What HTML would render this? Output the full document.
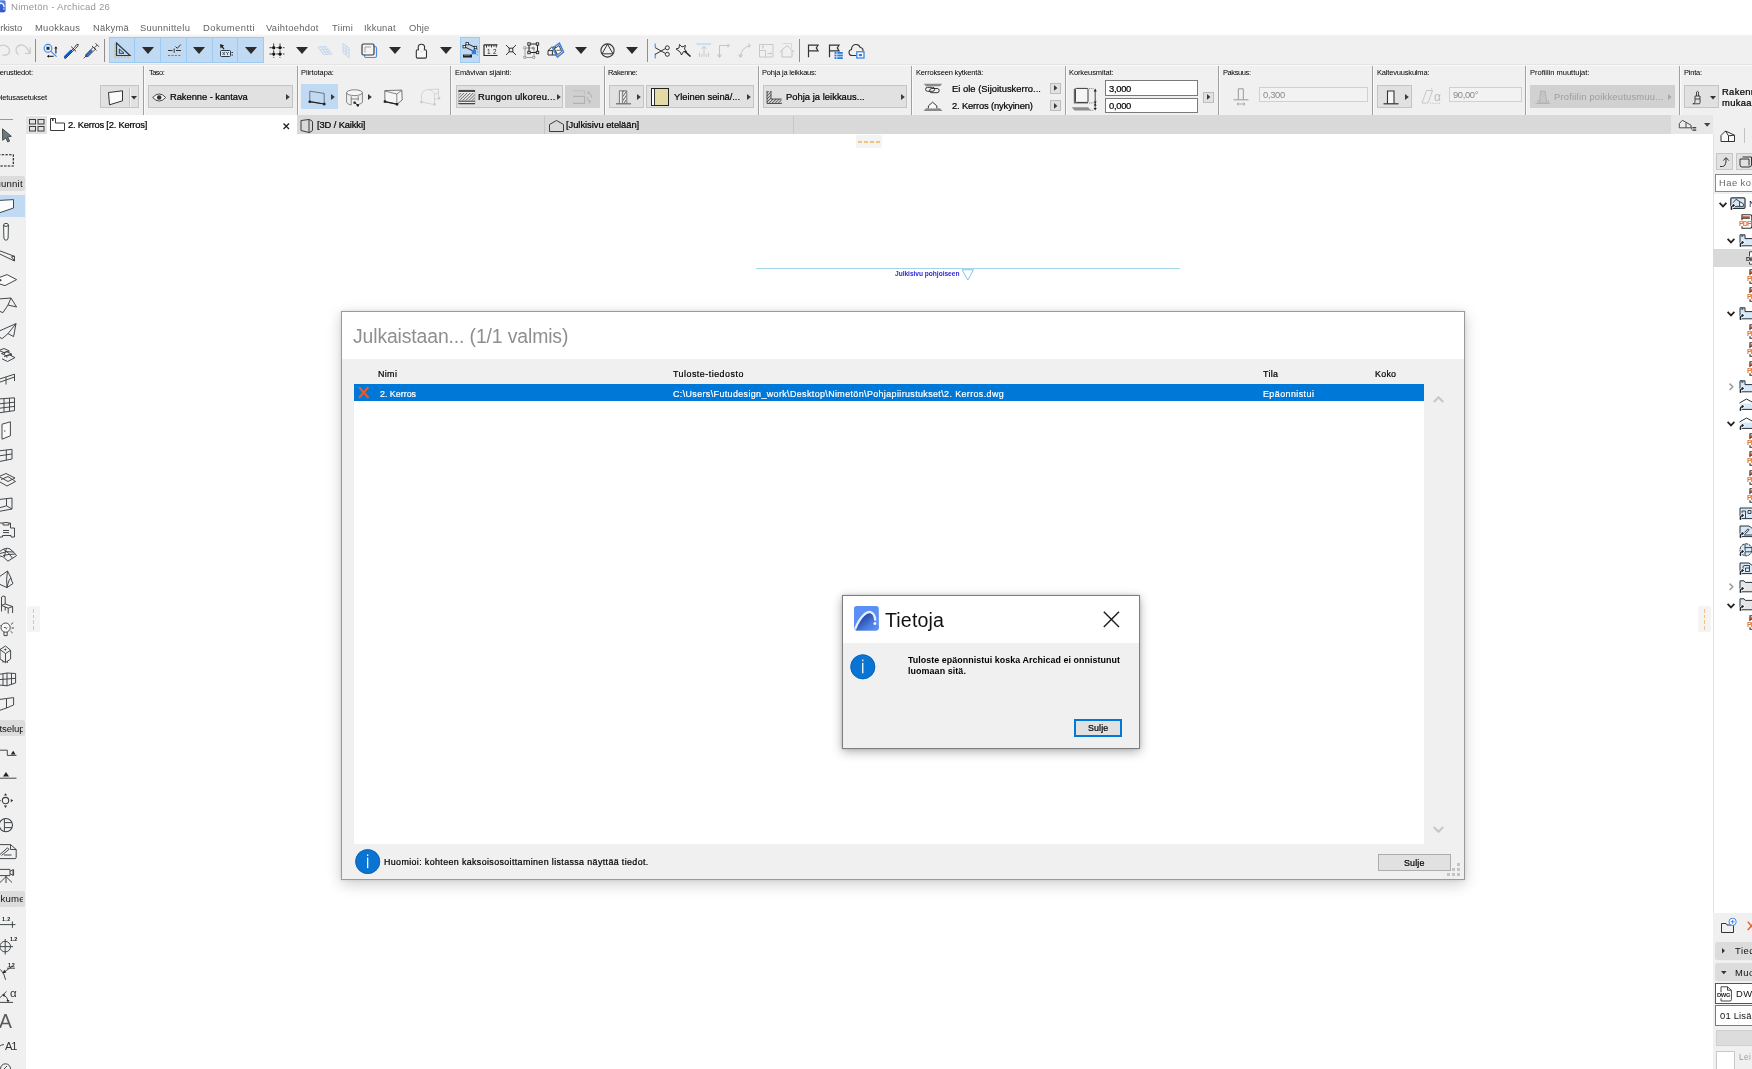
<!DOCTYPE html>
<html lang="fi">
<head>
<meta charset="utf-8">
<title>Nimetön - Archicad 26</title>
<style>
html,body{margin:0;padding:0;}
body{width:1752px;height:1069px;overflow:hidden;background:#fff;position:relative;
font-family:"Liberation Sans",sans-serif;}
.a{position:absolute;box-sizing:border-box;}
.t{white-space:nowrap;display:block;will-change:transform;}
svg{overflow:visible;}
.s{fill:none;stroke:#3c3c3c;stroke-width:1;}
</style>
</head>
<body>
<div class="a" style="left:0px;top:35px;width:1752px;height:81px;background:#f0f0f0;"></div>
<div class="a" style="left:0px;top:34px;width:1752px;height:2px;background:linear-gradient(#fff,#f0f0f0);"></div>
<div class="a" style="left:0px;top:64px;width:1752px;height:1px;background:#e4e4e4;"></div>
<div class="a" style="left:0px;top:65px;width:1752px;height:1px;background:#f8f8f8;"></div>
<svg class="a" style="left:-7px;top:0px;" width="13" height="13" viewBox="0 0 13 13"><defs><linearGradient id="lg0" x1="0" y1="0" x2="0.6" y2="1"><stop offset="0" stop-color="#6a97f2"/><stop offset="1" stop-color="#3660d2"/></linearGradient></defs><rect x="0" y="0.2" width="12.6" height="12.1" rx="1.8" fill="url(#lg0)"/><path d="M1 11.5 C2.5 4.5 8 1.2 10.4 4.2 Q11.1 5.6 11.2 7.4 L11.2 12.3 L1 12.3 Z" fill="#2f55c4" opacity="0.6"/><path d="M1 11 C2.6 4.6 8 1.4 10.4 4.4 Q11 5.6 11 7.2" fill="none" stroke="#eef4ff" stroke-width="1.5"/><circle cx="10.9" cy="9" r="0.8" fill="#eef4ff"/></svg>
<span class="a t " style="top:0.27px;font-size:9.6px;line-height:14px;color:#979797;letter-spacing:0.228px;left:11.00px;">Nimetön - Archicad 26</span>
<span class="a t " style="top:20.94px;font-size:9.4px;line-height:14px;color:#636363;letter-spacing:-0.092px;left:-5.88px;">Arkisto</span>
<span class="a t " style="top:20.94px;font-size:9.4px;line-height:14px;color:#636363;letter-spacing:0.308px;left:35.00px;">Muokkaus</span>
<span class="a t " style="top:20.94px;font-size:9.4px;line-height:14px;color:#636363;letter-spacing:0.285px;left:92.50px;">Näkymä</span>
<span class="a t " style="top:20.94px;font-size:9.4px;line-height:14px;color:#636363;letter-spacing:0.296px;left:140.40px;">Suunnittelu</span>
<span class="a t " style="top:20.94px;font-size:9.4px;line-height:14px;color:#636363;letter-spacing:0.473px;left:202.70px;">Dokumentti</span>
<span class="a t " style="top:20.94px;font-size:9.4px;line-height:14px;color:#636363;letter-spacing:0.312px;left:266.40px;">Vaihtoehdot</span>
<span class="a t " style="top:20.94px;font-size:9.4px;line-height:14px;color:#636363;letter-spacing:0.353px;left:331.50px;">Tiimi</span>
<span class="a t " style="top:20.94px;font-size:9.4px;line-height:14px;color:#636363;letter-spacing:0.216px;left:364.40px;">Ikkunat</span>
<span class="a t " style="top:20.94px;font-size:9.4px;line-height:14px;color:#636363;letter-spacing:0.148px;left:408.50px;">Ohje</span>
<div class="a" style="left:26px;top:115px;width:1645px;height:19px;background:#d9d9d9;"></div>
<div class="a" style="left:26px;top:115px;width:270.5px;height:19px;background:#fff;"></div>
<div class="a" style="left:26px;top:116px;width:21px;height:17.5px;background:#e2e2e2;"></div>
<div class="a" style="left:544px;top:116px;width:1px;height:18px;background:#c6c6c6;"></div>
<div class="a" style="left:793px;top:116px;width:1px;height:18px;background:#c6c6c6;"></div>
<svg class="a" style="left:29px;top:118.5px;" width="16" height="13" viewBox="0 0 16 13"><g class="s" stroke="#4a4a4a"><rect x="0.5" y="0.5" width="6" height="4.5"/><rect x="9" y="0.5" width="6" height="4.5"/><rect x="0.5" y="7.5" width="6" height="4.5"/><rect x="9" y="7.5" width="6" height="4.5"/></g></svg>
<svg class="a" style="left:50px;top:118px;" width="16" height="13" viewBox="0 0 16 13"><path class="s" stroke="#333" d="M0.5 0.5 H5.5 V5 H14.5 V12.5 H0.5 Z M2.5 0.5 V3 M2.5 2 H4"/></svg>
<span class="a t " style="top:118.14px;font-size:9.4px;line-height:14px;color:#000;-webkit-text-stroke:0.22px;letter-spacing:-0.231px;left:67.50px;">2. Kerros [2. Kerros]</span>
<svg class="a" style="left:283px;top:122.5px;" width="7" height="7" viewBox="0 0 7 7"><path d="M0.5 0.5 L6 6 M6 0.5 L0.5 6" stroke="#222" stroke-width="1.3" fill="none"/></svg>
<svg class="a" style="left:300px;top:118.5px;" width="14" height="14" viewBox="0 0 14 14"><path class="s" stroke="#333" d="M1 1.5 L9 0.5 Q12.5 1.5 12.5 3 V11 Q12.5 12.5 9 13.5 L1 11.5 Z M9 0.5 V13.5" fill="#fff"/></svg>
<span class="a t " style="top:118.14px;font-size:9.4px;line-height:14px;color:#000;-webkit-text-stroke:0.22px;letter-spacing:-0.129px;left:316.70px;">[3D / Kaikki]</span>
<svg class="a" style="left:549px;top:119.5px;" width="15" height="12" viewBox="0 0 15 12"><path class="s" stroke="#333" fill="#fff" d="M0.5 11.5 V4.5 L7.5 0.5 L14.5 4.5 V11.5 Z"/></svg>
<span class="a t " style="top:118.14px;font-size:9.4px;line-height:14px;color:#000;-webkit-text-stroke:0.22px;letter-spacing:-0.044px;left:565.80px;">[Julkisivu etelään]</span>
<div class="a" style="left:1671px;top:115px;width:42px;height:19px;background:#e7e7e7;"></div>
<svg class="a" style="left:1678px;top:119px;" width="20" height="13" viewBox="0 0 20 13"><path d="M1.3 8.8 V4.6 L4.4 1.3 L13 6.2 V8.8 Z M8 3.6 V8.8" fill="#ececec" stroke="#4a4a4a" stroke-width="1"/><rect x="14.4" y="8" width="3.8" height="1.4" fill="#444"/><rect x="14.4" y="10.4" width="3.8" height="1.4" fill="#444"/><rect x="13" y="7.6" width="0.9" height="3" fill="#666"/></svg>
<svg class="a" style="left:1703.6px;top:123.2px;" width="6.4" height="3.8" viewBox="0 0 6.4 3.8"><path d="M0 0 H6.4 L3.2 3.8 Z" fill="#444"/></svg>
<div class="a" style="left:856px;top:135px;width:26px;height:13px;background:#f4f4f4;border-radius:2px;"></div>
<div class="a" style="left:858.3px;top:141.3px;width:4px;height:1.3px;background:#f5c27c;"></div>
<div class="a" style="left:864.3px;top:141.3px;width:4px;height:1.3px;background:#f5c27c;"></div>
<div class="a" style="left:870.3px;top:141.3px;width:4px;height:1.3px;background:#f5c27c;"></div>
<div class="a" style="left:876.3px;top:141.3px;width:4px;height:1.3px;background:#f5c27c;"></div>
<div class="a" style="left:26.5px;top:606px;width:13px;height:26px;background:#f4f4f4;border-radius:2px;"></div>
<div class="a" style="left:1698px;top:606px;width:13px;height:25.5px;background:#f4f4f4;border-radius:2px;"></div>
<div class="a" style="left:33px;top:609.0px;width:1.3px;height:3.8px;background:#f5c27c;"></div>
<div class="a" style="left:1704px;top:609.0px;width:1.3px;height:3.8px;background:#f5c27c;"></div>
<div class="a" style="left:33px;top:614.6px;width:1.3px;height:3.8px;background:#f5c27c;"></div>
<div class="a" style="left:1704px;top:614.6px;width:1.3px;height:3.8px;background:#f5c27c;"></div>
<div class="a" style="left:33px;top:620.2px;width:1.3px;height:3.8px;background:#f5c27c;"></div>
<div class="a" style="left:1704px;top:620.2px;width:1.3px;height:3.8px;background:#f5c27c;"></div>
<div class="a" style="left:33px;top:625.8px;width:1.3px;height:3.8px;background:#f5c27c;"></div>
<div class="a" style="left:1704px;top:625.8px;width:1.3px;height:3.8px;background:#f5c27c;"></div>
<div class="a" style="left:756px;top:268px;width:424px;height:1.2px;background:#a5d3ea;"></div>
<span class="a t " style="top:267.81px;font-size:6.6px;line-height:11px;color:#2a2ad8;font-weight:bold;letter-spacing:-0.022px;left:895.00px;">Julkisivu pohjoiseen</span>
<svg class="a" style="left:961px;top:268.5px;" width="14" height="12" viewBox="0 0 14 12"><path d="M1 0.8 L12.5 0.8 L6.8 11 Z" fill="#fff" stroke="#7fc4ea" stroke-width="1"/></svg>
<svg class="a" style="left:-4px;top:43px;" width="16" height="14" viewBox="0 0 16 14"><path d="M4 3 Q8.5 0.8 12 4.2 Q15 8 12.2 11 Q10 13 6.5 11.8" fill="none" stroke="#cdcdcd" stroke-width="1.3"/></svg>
<svg class="a" style="left:15px;top:43px;" width="17" height="14" viewBox="0 0 17 14"><path d="M3.6 11.8 Q0 8.5 1.4 5 Q3.5 1.2 8 2.2 Q11.5 3.2 14.8 10 M10 10.4 H15.3 V4.2" fill="none" stroke="#cdcdcd" stroke-width="1.3"/></svg>
<div class="a" style="left:34.9px;top:39px;width:1.3px;height:22.700000000000003px;background:#8e8e8e;"></div>
<svg class="a" style="left:43px;top:43px;" width="16" height="16" viewBox="0 0 16 16"><circle cx="5" cy="5.3" r="3.9" fill="#e9f2fc" stroke="#3f86e0" stroke-width="1.1"/><rect x="3.5" y="3.8" width="3" height="3" fill="#1e2a33"/><path d="M8 8.3 L13.6 13.7" stroke="#3f86e0" stroke-width="1.1"/><path d="M12.9 10.6 V4.2" stroke="#1e1e1e" stroke-width="1.1"/><path d="M11.3 5.4 L12.9 3.2 L14.5 5.4 Z" fill="#1e1e1e"/><path d="M10.6 13.3 H5" stroke="#1e1e1e" stroke-width="1.1"/><path d="M6 11.8 L3.8 13.3 L6 14.8 Z" fill="#1e1e1e"/></svg>
<svg class="a" style="left:63px;top:42px;" width="17" height="17" viewBox="0 0 17 17"><path d="M2.4 14.8 L8 9.2" stroke="#2a6fd6" stroke-width="3" stroke-linecap="round"/><path d="M1.5 15.6 L11.6 5.4 Q13.6 1.6 15.2 2.2 Q16 3.6 12.6 6.4 L2.8 16.2 Q1.2 16.8 1.5 15.6 Z" fill="none" stroke="#333" stroke-width="0.9"/><path d="M8.2 4.6 L13 9.4" stroke="#333" stroke-width="1"/></svg>
<svg class="a" style="left:83px;top:42px;" width="17" height="17" viewBox="0 0 17 17"><path d="M3.5 13.8 L8.2 9" stroke="#2a6fd6" stroke-width="2.6" stroke-linecap="round"/><path d="M0.8 16.3 L3 14 M2.5 13 L10.5 5 L12.5 7 L4.5 15 Z M9 4 L13.5 8.5 M11.8 5.5 L14.3 3 M12.5 1.2 L16 4.8" fill="none" stroke="#333" stroke-width="0.9"/></svg>
<div class="a" style="left:103.9px;top:39px;width:1.3px;height:22.700000000000003px;background:#8e8e8e;"></div>
<div class="a" style="left:109px;top:37.2px;width:155px;height:25.5px;background:#bfdaf2;border:1px solid #9ccaf0;"></div>
<div class="a" style="left:133.9px;top:38px;width:1px;height:24px;background:#9ccaf0;"></div>
<div class="a" style="left:159.9px;top:38px;width:1px;height:24px;background:#9ccaf0;"></div>
<div class="a" style="left:185.8px;top:38px;width:1px;height:24px;background:#9ccaf0;"></div>
<div class="a" style="left:211.7px;top:38px;width:1px;height:24px;background:#9ccaf0;"></div>
<div class="a" style="left:236.9px;top:38px;width:1px;height:24px;background:#9ccaf0;"></div>
<svg class="a" style="left:114px;top:42px;" width="18" height="16" viewBox="0 0 18 16"><path d="M2.5 1 L16 13.5 H2.5 Z" fill="none" stroke="#2b3a48" stroke-width="1.2"/><path d="M5.3 7 L10 11.3 H5.3 Z" fill="none" stroke="#2b3a48" stroke-width="1"/><path d="M1 1.5 V15 H16.5" fill="none" stroke="#f0a040" stroke-width="1" stroke-dasharray="2 1.2"/></svg>
<svg class="a" style="left:141.7px;top:46.9px;" width="12" height="7" viewBox="0 0 12 7"><path d="M0 0 H12 L6.0 7 Z" fill="#2b2b2b"/></svg>
<svg class="a" style="left:167px;top:43px;" width="15" height="14" viewBox="0 0 15 14"><path d="M1 7.5 H5.5 M9 7.5 H14 M7.2 5.5 V9.8" stroke="#333" stroke-width="1" fill="none"/><path d="M8.5 3.5 L10.3 5.3 L13.8 1.5" stroke="#333" stroke-width="1" fill="none"/><path d="M1 12.5 H14" stroke="#3f86e0" stroke-width="1.1" stroke-dasharray="2.2 1.2"/></svg>
<svg class="a" style="left:193.0px;top:46.9px;" width="12" height="7" viewBox="0 0 12 7"><path d="M0 0 H12 L6.0 7 Z" fill="#2b2b2b"/></svg>
<svg class="a" style="left:219px;top:43px;" width="15" height="15" viewBox="0 0 15 15"><path d="M1 1 L1.5 5.5 L2.8 4.3 L4.5 6.5 L5.5 5.7 L3.8 3.6 L5.2 2.6 Z" fill="#222"/><rect x="1.5" y="7.5" width="10" height="6" rx="1" fill="#dbe9f5" stroke="#2b3a48" stroke-width="1"/><path d="M3.5 9 L6 12 M6 9 L3.5 12 M7.2 9 L8.5 10.5 L9.8 9 M8.5 10.5 V12" stroke="#2b3a48" stroke-width="0.8" fill="none"/><path d="M12.5 9.5 H14 M12.5 12 H14" stroke="#2b3a48" stroke-width="1"/></svg>
<svg class="a" style="left:244.7px;top:46.9px;" width="12" height="7" viewBox="0 0 12 7"><path d="M0 0 H12 L6.0 7 Z" fill="#2b2b2b"/></svg>
<svg class="a" style="left:268px;top:41.5px;" width="18" height="18" viewBox="0 0 18 18"><path d="M1.5 5.7 H16.5 M1.5 12 H16.5 M5.7 1.5 V15.8 M12 1.5 V15.8" stroke="#222" stroke-width="0.9" stroke-dasharray="2.4 1" fill="none"/><circle cx="5.7" cy="5.7" r="1.6" fill="#111"/><circle cx="12" cy="5.7" r="1.6" fill="#111"/><circle cx="5.7" cy="12" r="1.6" fill="#111"/><circle cx="12" cy="12" r="1.6" fill="#111"/></svg>
<svg class="a" style="left:296.0px;top:46.9px;" width="12" height="7" viewBox="0 0 12 7"><path d="M0 0 H12 L6.0 7 Z" fill="#2b2b2b"/></svg>
<svg class="a" style="left:317px;top:46px;" width="16" height="9" viewBox="0 0 16 9"><path d="M1 1 L9 0.5 L15 8 L6.5 8.5 Z M4 0.8 L9.7 8.3 M6.7 0.6 L12.4 8.1 M3.2 3.8 L11.4 3.3 M5 6.2 L13.2 5.7" fill="none" stroke="#b7d0ee" stroke-width="0.8"/></svg>
<svg class="a" style="left:342px;top:43px;" width="8" height="15" viewBox="0 0 8 15"><path d="M1 0.5 L7 5 V14.5 L1 9.5 Z M4 2.7 V12 M1 3.6 L7 8 M1 6.6 L7 11.2" fill="none" stroke="#b7d0ee" stroke-width="0.8"/></svg>
<svg class="a" style="left:361px;top:42.5px;" width="17" height="16" viewBox="0 0 17 16"><rect x="3.5" y="3.5" width="12" height="11" rx="1.5" fill="none" stroke="#4c8be0" stroke-width="1.1"/><rect x="1" y="1" width="12" height="11" rx="1.5" fill="#f4f4f4" stroke="#3a3a3a" stroke-width="1.2"/><path d="M4 9.5 V4 H10" fill="none" stroke="#9a9a9a" stroke-width="0.9"/></svg>
<svg class="a" style="left:388.7px;top:46.9px;" width="12" height="7" viewBox="0 0 12 7"><path d="M0 0 H12 L6.0 7 Z" fill="#2b2b2b"/></svg>
<svg class="a" style="left:414px;top:42.5px;" width="14" height="16" viewBox="0 0 14 16"><rect x="2.3" y="6.8" width="10.2" height="8.3" rx="1.3" fill="#f7f7f7" stroke="#333" stroke-width="1.1"/><circle cx="7.4" cy="4.4" r="3.2" fill="#f7f7f7" stroke="#333" stroke-width="1.1"/><rect x="5" y="6" width="4.8" height="2" fill="#f7f7f7"/></svg>
<svg class="a" style="left:440.3px;top:46.9px;" width="12" height="7" viewBox="0 0 12 7"><path d="M0 0 H12 L6.0 7 Z" fill="#2b2b2b"/></svg>
<div class="a" style="left:460px;top:37.2px;width:20px;height:25.5px;background:#bfdaf2;border:1px solid #9ccaf0;"></div>
<svg class="a" style="left:462px;top:42px;" width="16" height="17" viewBox="0 0 16 17"><path d="M2 4.5 L5 1.5 L13.5 5.5 L11 9 Z" fill="none" stroke="#222" stroke-width="1"/><rect x="1" y="3.5" width="2.4" height="2.4" fill="#fff" stroke="#222" stroke-width="0.8"/><rect x="4" y="0.5" width="2.4" height="2.4" fill="#fff" stroke="#222" stroke-width="0.8"/><rect x="12.3" y="4.3" width="2.4" height="2.4" fill="#fff" stroke="#222" stroke-width="0.8"/><rect x="9.8" y="8" width="4.2" height="4.2" fill="#2f7de1"/><path d="M14.5 8 L16 7 M15 10 H16.5 M14.5 12.3 L16 13.2 M9 13 L8 14.5" stroke="#2f7de1" stroke-width="0.8"/><rect x="1" y="12.5" width="9" height="3" fill="#222"/><path d="M3 12.5 V14 M5 12.5 V14 M7 12.5 V14" stroke="#bfdaf2" stroke-width="0.7"/></svg>
<svg class="a" style="left:483px;top:44.2px;" width="15" height="13" viewBox="0 0 15 13"><path d="M0.8 0.8 H14.5 M1 0.8 V11.5 H14.5" fill="none" stroke="#2b2b2b" stroke-width="1.2"/><path d="M3.5 1 V3.5 M6 1 V2.8 M8.5 1 V3.5 M11 1 V2.8 M13.3 1 V3.5" stroke="#2b2b2b" stroke-width="0.9"/></svg>
<span class="a t " style="top:47.28px;font-size:6.4px;line-height:10px;color:#222;letter-spacing:2.481px;left:486.60px;">12</span>
<svg class="a" style="left:505px;top:44.2px;" width="12" height="12" viewBox="0 0 12 12"><path d="M1 1 L11 11 M11 1 L1 11" stroke="#333" stroke-width="1"/><rect x="4.2" y="4.2" width="3.6" height="3.6" fill="#f0f0f0" stroke="#333" stroke-width="1"/></svg>
<svg class="a" style="left:523px;top:42px;" width="17" height="17" viewBox="0 0 17 17"><rect x="2" y="6" width="9" height="9.5" fill="none" stroke="#8a8a8a" stroke-width="0.8"/><rect x="6" y="2" width="8.5" height="8.5" fill="none" stroke="#222" stroke-width="1"/><rect x="4.8" y="0.8" width="2.4" height="2.4" fill="#fff" stroke="#222" stroke-width="0.9"/><rect x="13.3" y="0.8" width="2.4" height="2.4" fill="#fff" stroke="#222" stroke-width="0.9"/><rect x="4.8" y="9.3" width="2.4" height="2.4" fill="#fff" stroke="#222" stroke-width="0.9"/><rect x="13.3" y="9.3" width="2.4" height="2.4" fill="#fff" stroke="#222" stroke-width="0.9"/><circle cx="10.3" cy="6.2" r="1" fill="none" stroke="#666" stroke-width="0.7"/><rect x="0.8" y="4.8" width="2" height="2" fill="#fff" stroke="#8a8a8a" stroke-width="0.7"/><rect x="0.8" y="14.3" width="2" height="2" fill="#fff" stroke="#8a8a8a" stroke-width="0.7"/><rect x="9.8" y="14.3" width="2" height="2" fill="#fff" stroke="#8a8a8a" stroke-width="0.7"/></svg>
<svg class="a" style="left:547px;top:42px;" width="18" height="17" viewBox="0 0 18 17"><path d="M1 8.6 L4.6 5.2 H9 V13 H1 Z M1 8.6 H5.4 V13 M5.4 8.6 L9 5.2" fill="#f4f4f4" stroke="#333" stroke-width="1"/><path d="M5.6 6 L12.4 1.2 L16.6 10 L10.4 15 Z" fill="none" stroke="#3b82e0" stroke-width="1.5"/><path d="M7.4 6.8 L12 3.6 L14.6 9.4 L10.6 12.6 Z" fill="#fff" stroke="#333" stroke-width="0.9"/><path d="M9.4 8.4 L13.6 8.2" stroke="#333" stroke-width="0.8"/></svg>
<svg class="a" style="left:575.3px;top:46.9px;" width="12" height="7" viewBox="0 0 12 7"><path d="M0 0 H12 L6.0 7 Z" fill="#2b2b2b"/></svg>
<svg class="a" style="left:599.5px;top:42.5px;" width="15" height="15" viewBox="0 0 15 15"><circle cx="7.5" cy="7.5" r="6.6" fill="none" stroke="#333" stroke-width="1.1"/><path d="M7.5 1.2 L13 10.8 H2 Z" fill="none" stroke="#333" stroke-width="1"/></svg>
<svg class="a" style="left:626.3px;top:46.9px;" width="12" height="7" viewBox="0 0 12 7"><path d="M0 0 H12 L6.0 7 Z" fill="#2b2b2b"/></svg>
<div class="a" style="left:646.9px;top:39px;width:1.3px;height:22.700000000000003px;background:#8e8e8e;"></div>
<svg class="a" style="left:654px;top:42.5px;" width="17" height="16" viewBox="0 0 17 16"><path d="M1.2 0.5 V4 M1.2 10.5 V15.5" stroke="#3b82e0" stroke-width="1"/><path d="M1 4.5 L11.5 10.5 M1 11.5 L11.5 5.5" stroke="#333" stroke-width="1" fill="none"/><circle cx="13.3" cy="4.8" r="2" fill="none" stroke="#333" stroke-width="1"/><circle cx="13.3" cy="11.3" r="2" fill="none" stroke="#333" stroke-width="1"/></svg>
<svg class="a" style="left:674.5px;top:43px;" width="17" height="15" viewBox="0 0 17 15"><path d="M1 6 L4 5 L4.5 1.5 L7 4 L10.5 2.5 L9.5 6 L11.5 8.5 L8.3 8.8 L6.5 12 L5 8.8 Z" fill="none" stroke="#333" stroke-width="1"/><path d="M9.5 8 L15.5 13.5" stroke="#222" stroke-width="1.6"/></svg>
<svg class="a" style="left:696px;top:43px;" width="16" height="15" viewBox="0 0 16 15"><path d="M0.5 1 H15" stroke="#a9cdf3" stroke-width="1"/><path d="M8 3.5 V13.5 M5.5 6 L8 3.3 L10.5 6 M3.5 9.5 V14 M5.8 11 V14 M10.2 11 V14 M12.5 9.5 V14" fill="none" stroke="#c4c4c4" stroke-width="0.9"/></svg>
<svg class="a" style="left:717px;top:43px;" width="15" height="15" viewBox="0 0 15 15"><path d="M2.5 14 V2.5 H13 M11 0.5 V4.5 M0.5 12 H4.5 M1 12.5 L2.5 14.5 L4 12.5" fill="none" stroke="#c4c4c4" stroke-width="1"/></svg>
<svg class="a" style="left:738px;top:43px;" width="15" height="15" viewBox="0 0 15 15"><path d="M2.5 14 Q3 4 13 2.5 M11 0.5 V4.5 M0.5 12 H4.5 M1 12.5 L2.5 14.5 L4 12.5" fill="none" stroke="#c4c4c4" stroke-width="1"/></svg>
<svg class="a" style="left:759px;top:43.5px;" width="15" height="14" viewBox="0 0 15 14"><path d="M0.5 0.5 H14 V13 H0.5 Z M0.5 6.5 H6.5 V13 M4 4.5 V2 M3 3 L4 1.8 L5 3 M8.5 9.5 H12.5 M11.5 8.5 L12.7 9.5 L11.5 10.5" fill="none" stroke="#c4c4c4" stroke-width="0.9"/></svg>
<svg class="a" style="left:779px;top:43px;" width="16" height="15" viewBox="0 0 16 15"><path d="M3.5 0.5 H12.5 V5" fill="none" stroke="#d6d6d6" stroke-width="0.9"/><path d="M0.8 9 L8 2.5 L15.2 9 M3 7.5 V14 H13 V7.5" fill="none" stroke="#c4c4c4" stroke-width="1"/></svg>
<div class="a" style="left:798.9px;top:39px;width:1.3px;height:22.700000000000003px;background:#8e8e8e;"></div>
<svg class="a" style="left:806.5px;top:43.5px;" width="13" height="15" viewBox="0 0 13 15"><path d="M1.5 13.2 V1.2 H11 L9.3 3.9 L11 6.8 H1.5" fill="none" stroke="#333" stroke-width="1.2"/></svg>
<svg class="a" style="left:827.5px;top:43.5px;" width="16" height="16" viewBox="0 0 16 16"><path d="M1.5 13.2 V1.2 H11 L9.3 3.9 L11 6.8 H1.5" fill="none" stroke="#333" stroke-width="1.2"/><rect x="6.5" y="8" width="2" height="1.8" fill="#2f7de1"/><rect x="9.3" y="8" width="5.5" height="1.8" fill="#2f7de1"/><rect x="6.5" y="10.6" width="2" height="1.8" fill="#2f7de1"/><rect x="9.3" y="10.6" width="5.5" height="1.8" fill="#2f7de1"/><rect x="6.5" y="13.2" width="2" height="1.8" fill="#2f7de1"/><rect x="9.3" y="13.2" width="5.5" height="1.8" fill="#2f7de1"/></svg>
<svg class="a" style="left:847.5px;top:43px;" width="17" height="16" viewBox="0 0 17 16"><path d="M8.5 12.5 H4.5 Q1 12.5 1 9.5 Q1 7 3.5 6.5 Q3.5 2.5 7.2 1.5 Q11 1 12.3 4.5 Q15.3 5 15 8" fill="none" stroke="#333" stroke-width="1.1"/><rect x="8.8" y="8.8" width="7.2" height="6.2" fill="#fff" stroke="#2f7de1" stroke-width="1.2"/><rect x="10.8" y="11" width="3.2" height="2.2" fill="#2f7de1"/></svg>
<div class="a" style="left:143.0px;top:66px;width:1px;height:48.5px;background:#a0a0a0;"></div>
<div class="a" style="left:144.0px;top:66px;width:1px;height:48.5px;background:#fafafa;"></div>
<div class="a" style="left:297.0px;top:66px;width:1px;height:48.5px;background:#a0a0a0;"></div>
<div class="a" style="left:298.0px;top:66px;width:1px;height:48.5px;background:#fafafa;"></div>
<div class="a" style="left:450.2px;top:66px;width:1px;height:48.5px;background:#a0a0a0;"></div>
<div class="a" style="left:451.2px;top:66px;width:1px;height:48.5px;background:#fafafa;"></div>
<div class="a" style="left:604.0px;top:66px;width:1px;height:48.5px;background:#a0a0a0;"></div>
<div class="a" style="left:605.0px;top:66px;width:1px;height:48.5px;background:#fafafa;"></div>
<div class="a" style="left:757.5px;top:66px;width:1px;height:48.5px;background:#a0a0a0;"></div>
<div class="a" style="left:758.5px;top:66px;width:1px;height:48.5px;background:#fafafa;"></div>
<div class="a" style="left:910.9px;top:66px;width:1px;height:48.5px;background:#a0a0a0;"></div>
<div class="a" style="left:911.9px;top:66px;width:1px;height:48.5px;background:#fafafa;"></div>
<div class="a" style="left:1064.7px;top:66px;width:1px;height:48.5px;background:#a0a0a0;"></div>
<div class="a" style="left:1065.7px;top:66px;width:1px;height:48.5px;background:#fafafa;"></div>
<div class="a" style="left:1218.1px;top:66px;width:1px;height:48.5px;background:#a0a0a0;"></div>
<div class="a" style="left:1219.1px;top:66px;width:1px;height:48.5px;background:#fafafa;"></div>
<div class="a" style="left:1371.9px;top:66px;width:1px;height:48.5px;background:#a0a0a0;"></div>
<div class="a" style="left:1372.9px;top:66px;width:1px;height:48.5px;background:#fafafa;"></div>
<div class="a" style="left:1525.1px;top:66px;width:1px;height:48.5px;background:#a0a0a0;"></div>
<div class="a" style="left:1526.1px;top:66px;width:1px;height:48.5px;background:#fafafa;"></div>
<div class="a" style="left:1679.1px;top:66px;width:1px;height:48.5px;background:#a0a0a0;"></div>
<div class="a" style="left:1680.1px;top:66px;width:1px;height:48.5px;background:#fafafa;"></div>
<span class="a t " style="top:67.20px;font-size:7.5px;line-height:12px;color:#000;letter-spacing:-0.182px;left:-5.02px;">Perustiedot:</span>
<span class="a t " style="top:92.00px;font-size:7.5px;line-height:12px;color:#000;letter-spacing:-0.119px;left:-5.11px;">Oletusasetukset</span>
<div class="a" style="left:99.5px;top:85.3px;width:39.5px;height:23.2px;background:#e1e1e1;border:1px solid #c4c4c4;"></div>
<div class="a" style="left:129.3px;top:88px;width:1px;height:18px;background:#c4c4c4;"></div>
<div class="a" style="left:130.3px;top:88px;width:1px;height:18px;background:#f3f3f3;"></div>
<svg class="a" style="left:107px;top:89.5px;" width="18" height="16" viewBox="0 0 18 16"><path d="M1.5 2.5 L15.5 0.8 V10.8 L2.5 14.8 Z" fill="#fafafa" stroke="#333" stroke-width="1"/></svg>
<svg class="a" style="left:131.3px;top:95.5px;" width="6" height="3.4" viewBox="0 0 6 3.4"><path d="M0 0 H6 L3.0 3.4 Z" fill="#333"/></svg>
<span class="a t " style="top:67.20px;font-size:7.5px;line-height:12px;color:#000;letter-spacing:-0.532px;left:148.50px;">Taso:</span>
<div class="a" style="left:148px;top:85.3px;width:145.3px;height:23.2px;background:#e1e1e1;border:1px solid #c4c4c4;"></div>
<svg class="a" style="left:152px;top:92.5px;" width="15" height="9" viewBox="0 0 15 9"><path d="M0.7 4.5 Q7.2 -2.6 13.7 4.5 Q7.2 11.6 0.7 4.5 Z" fill="#fafafa" stroke="#333" stroke-width="0.9"/><circle cx="7.2" cy="4.5" r="2.3" fill="#333"/></svg>
<span class="a t " style="top:89.84px;font-size:9.4px;line-height:14px;color:#000;-webkit-text-stroke:0.22px;letter-spacing:-0.057px;left:170.30px;">Rakenne - kantava</span>
<svg class="a" style="left:286px;top:93.8px;" width="3.8" height="6.0" viewBox="0 0 3.8 6.0"><path d="M0 0 L3.8 3.0 L0 6.0 Z" fill="#3a3a3a"/></svg>
<span class="a t " style="top:67.20px;font-size:7.5px;line-height:12px;color:#000;letter-spacing:-0.087px;left:301.30px;">Piirtotapa:</span>
<div class="a" style="left:301px;top:84px;width:37px;height:24.7px;background:#bfdaf2;"></div>
<svg class="a" style="left:306px;top:89.5px;" width="20" height="16" viewBox="0 0 20 16"><path d="M3.8 1.2 L18.2 3.4 V14 L3.8 11.6 Z" fill="none" stroke="#5a5a5a" stroke-width="0.8"/><path d="M3.6 11.6 L18.2 14" stroke="#222" stroke-width="1.2"/><rect x="2.5" y="10.4" width="2.5" height="2.5" rx="0.6" fill="#222"/><rect x="17" y="12.8" width="2.5" height="2.5" rx="0.6" fill="#222"/></svg>
<svg class="a" style="left:331px;top:93.5px;" width="3.8" height="6.0" viewBox="0 0 3.8 6.0"><path d="M0 0 L3.8 3.0 L0 6.0 Z" fill="#3a3a3a"/></svg>
<svg class="a" style="left:344.5px;top:88.5px;" width="19" height="18" viewBox="0 0 19 18"><ellipse cx="9.5" cy="3.7" rx="7.9" ry="2.9" fill="#f6f6f6" stroke="#6a6a6a" stroke-width="0.8"/><path d="M1.6 3.7 V13.4 Q3 15.4 6.2 16 V7.2 M17.4 3.7 V13.4 Q16.4 14.6 13.2 15.6 M13.2 11.5 V7.2 M6.2 10 H13.2" fill="none" stroke="#6a6a6a" stroke-width="0.8"/><rect x="8.4" y="12.4" width="2.4" height="2.4" rx="0.6" fill="#222"/><rect x="11.6" y="15" width="2.4" height="2.4" rx="0.6" fill="#222"/><path d="M9.5 13.5 L12.8 16.2" stroke="#222" stroke-width="1"/></svg>
<svg class="a" style="left:368px;top:93.5px;" width="3.8" height="6.0" viewBox="0 0 3.8 6.0"><path d="M0 0 L3.8 3.0 L0 6.0 Z" fill="#3a3a3a"/></svg>
<svg class="a" style="left:382.5px;top:89px;" width="21" height="17" viewBox="0 0 21 17"><path d="M1.8 1.6 L18.8 1.1 L19.2 11 L13.8 15.2 L1.9 12.6 Z" fill="#f6f6f6" stroke="#555" stroke-width="0.8"/><path d="M1.8 2 L13.8 5 L18.8 1.4 M13.8 5 V15.2" fill="none" stroke="#6a6a6a" stroke-width="0.8"/><path d="M1.9 12.6 L13.8 15.2" stroke="#222" stroke-width="1.2"/><rect x="0.7" y="11.3" width="2.5" height="2.5" rx="0.6" fill="#222"/><rect x="12.8" y="14" width="2.5" height="2.5" rx="0.6" fill="#222"/></svg>
<svg class="a" style="left:418.5px;top:88px;" width="23" height="18" viewBox="0 0 23 18"><path d="M2.5 14 V7.5 Q3 2 9 1.5 L19.5 1 V10.5 L15.5 11.2 V16.6 L2.5 14 M9 1.5 Q14.5 2.5 15.5 6.5 L19.5 4.5 M15.5 6.5 V11.2" fill="none" stroke="#cdcdcd" stroke-width="0.8"/><rect x="1.3" y="13" width="2.2" height="2.2" fill="#c8c8c8"/><rect x="14.5" y="15.3" width="2.2" height="2.2" fill="#c8c8c8"/><rect x="19" y="9.2" width="2.2" height="2.2" fill="#c8c8c8"/></svg>
<span class="a t " style="top:67.20px;font-size:7.5px;line-height:12px;color:#000;letter-spacing:-0.091px;left:455.30px;">Emävivan sijainti:</span>
<div class="a" style="left:455.5px;top:85.3px;width:107.5px;height:23.2px;background:#e1e1e1;border:1px solid #c4c4c4;"></div>
<svg class="a" style="left:458px;top:88.5px;" width="18" height="17" viewBox="0 0 18 17"><defs><pattern id="h1" width="2.2" height="2.2" patternUnits="userSpaceOnUse" patternTransform="rotate(-45)"><rect width="2.2" height="0.9" fill="#777"/></pattern></defs><rect x="0.5" y="1" width="16.5" height="14.5" rx="1" fill="#ededed" stroke="#bdbdbd" stroke-width="0.8"/><rect x="0.8" y="4" width="16" height="7.5" fill="url(#h1)"/><path d="M0.5 2 H17" stroke="#222" stroke-width="1.6"/><path d="M0.5 12.2 H17 M0.5 14.6 H17" stroke="#333" stroke-width="1"/></svg>
<span class="a t " style="top:89.84px;font-size:9.4px;line-height:14px;color:#000;-webkit-text-stroke:0.22px;letter-spacing:0.206px;left:477.50px;">Rungon ulkoreu...</span>
<svg class="a" style="left:557px;top:93.8px;" width="3.8" height="6.0" viewBox="0 0 3.8 6.0"><path d="M0 0 L3.8 3.0 L0 6.0 Z" fill="#3a3a3a"/></svg>
<div class="a" style="left:565px;top:85.3px;width:35px;height:23.2px;background:#d0d0d0;"></div>
<svg class="a" style="left:572px;top:89.5px;" width="22" height="15" viewBox="0 0 22 15"><path d="M1 0.9 H12.6 V5" fill="none" stroke="#b2b2b2" stroke-width="0.9" stroke-dasharray="1.3 1"/><path d="M1 6.4 H12.6 V13.4 H1" fill="none" stroke="#b2b2b2" stroke-width="1.1"/><path d="M15.6 2.6 Q20.2 3.6 19.4 7.6 M17.4 1 L15.4 2.6 L17.2 4.4 M18.4 11.8 Q14.8 10.6 15.6 7 M16.8 13.4 L18.6 11.8 L17 10" fill="none" stroke="#b2b2b2" stroke-width="1"/></svg>
<span class="a t " style="top:67.20px;font-size:7.5px;line-height:12px;color:#000;letter-spacing:-0.344px;left:608.30px;">Rakenne:</span>
<div class="a" style="left:609.2px;top:85.3px;width:34.5px;height:23.2px;background:#e1e1e1;border:1px solid #c4c4c4;"></div>
<svg class="a" style="left:615px;top:89.5px;" width="17" height="15" viewBox="0 0 17 15"><defs><pattern id="h2" width="2.4" height="2.4" patternUnits="userSpaceOnUse" patternTransform="rotate(-55)"><rect width="2.4" height="1" fill="#6a6a6a"/></pattern></defs><rect x="4.4" y="1" width="7.4" height="12.5" fill="#f4f4f4"/><rect x="7.6" y="1" width="3.6" height="12.5" fill="url(#h2)"/><path d="M4.4 13.5 V0.8 H11.8 V13.5 M7.3 1 V13.5" fill="none" stroke="#6a6a6a" stroke-width="0.9"/><path d="M1 13.8 H16" stroke="#6a6a6a" stroke-width="1.2"/></svg>
<svg class="a" style="left:637px;top:93.8px;" width="3.8" height="6.0" viewBox="0 0 3.8 6.0"><path d="M0 0 L3.8 3.0 L0 6.0 Z" fill="#3a3a3a"/></svg>
<div class="a" style="left:645.7px;top:85.3px;width:108px;height:23.2px;background:#e1e1e1;border:1px solid #c4c4c4;"></div>
<div class="a" style="left:651px;top:88px;width:18.3px;height:18px;background:#e2dba6;border:1px solid #222;"></div>
<div class="a" style="left:652px;top:89px;width:2.4px;height:16px;background:#fff;"></div>
<div class="a" style="left:654.4px;top:89px;width:0.9px;height:16px;background:#333;"></div>
<span class="a t " style="top:89.84px;font-size:9.4px;line-height:14px;color:#000;-webkit-text-stroke:0.22px;letter-spacing:-0.043px;left:673.80px;">Yleinen seinä/...</span>
<svg class="a" style="left:747px;top:93.8px;" width="3.8" height="6.0" viewBox="0 0 3.8 6.0"><path d="M0 0 L3.8 3.0 L0 6.0 Z" fill="#3a3a3a"/></svg>
<span class="a t " style="top:67.20px;font-size:7.5px;line-height:12px;color:#000;letter-spacing:-0.216px;left:762.00px;">Pohja ja leikkaus:</span>
<div class="a" style="left:762.5px;top:85.3px;width:144.5px;height:23.2px;background:#e1e1e1;border:1px solid #c4c4c4;"></div>
<svg class="a" style="left:766px;top:89.5px;" width="17" height="15" viewBox="0 0 17 15"><defs><pattern id="h3" width="2.2" height="2.2" patternUnits="userSpaceOnUse" patternTransform="rotate(-45)"><rect width="2.2" height="0.9" fill="#555"/></pattern></defs><path d="M1 1 H5 V9 H15.5 V13.5 H1 Z" fill="url(#h3)" stroke="none"/><path d="M1 0.8 V13.5 H15.8 M5 0.8 V9 H15.5" fill="none" stroke="#444" stroke-width="0.9"/></svg>
<span class="a t " style="top:89.84px;font-size:9.4px;line-height:14px;color:#000;-webkit-text-stroke:0.22px;letter-spacing:0.027px;left:785.80px;">Pohja ja leikkaus...</span>
<svg class="a" style="left:900.5px;top:93.8px;" width="3.8" height="6.0" viewBox="0 0 3.8 6.0"><path d="M0 0 L3.8 3.0 L0 6.0 Z" fill="#3a3a3a"/></svg>
<span class="a t " style="top:67.20px;font-size:7.5px;line-height:12px;color:#000;letter-spacing:-0.166px;left:915.50px;">Kerrokseen kytkentä:</span>
<svg class="a" style="left:922.5px;top:82.5px;" width="20" height="11" viewBox="0 0 20 11"><path d="M0.8 0.8 H19.3 L17 3.2 H3 Z" fill="#8a8a8a"/><rect x="2.6" y="4.3" width="9" height="4" rx="2" fill="none" stroke="#333" stroke-width="1"/><rect x="6.6" y="5.5" width="9.6" height="4.2" rx="2.1" fill="none" stroke="#333" stroke-width="1"/></svg>
<span class="a t " style="top:81.54px;font-size:9.4px;line-height:14px;color:#000;-webkit-text-stroke:0.22px;letter-spacing:0.013px;left:952.20px;">Ei ole (Sijoituskerro...</span>
<div class="a" style="left:1050px;top:83px;width:11px;height:10.7px;background:#e1e1e1;border:1px solid #bdbdbd;"></div>
<svg class="a" style="left:1054px;top:85.39999999999999px;" width="3.4" height="5.8" viewBox="0 0 3.4 5.8"><path d="M0 0 L3.4 2.9 L0 5.8 Z" fill="#3a3a3a"/></svg>
<svg class="a" style="left:922.5px;top:100.5px;" width="20" height="11" viewBox="0 0 20 11"><path d="M3 7.2 H17 L19.5 10 H0.5 Z" fill="#8a8a8a"/><path d="M5.4 7.2 V4.9 L9.6 1.2 L13.8 4.9 V7.2" fill="#fafafa" stroke="#333" stroke-width="1" stroke-linejoin="miter"/></svg>
<span class="a t " style="top:99.04px;font-size:9.4px;line-height:14px;color:#000;-webkit-text-stroke:0.22px;letter-spacing:-0.159px;left:952.20px;">2. Kerros (nykyinen)</span>
<div class="a" style="left:1050px;top:100.4px;width:11px;height:10.7px;background:#e1e1e1;border:1px solid #bdbdbd;"></div>
<svg class="a" style="left:1054px;top:102.89999999999999px;" width="3.4" height="5.8" viewBox="0 0 3.4 5.8"><path d="M0 0 L3.4 2.9 L0 5.8 Z" fill="#3a3a3a"/></svg>
<span class="a t " style="top:67.20px;font-size:7.5px;line-height:12px;color:#000;letter-spacing:-0.104px;left:1069.20px;">Korkeusmitat:</span>
<svg class="a" style="left:1071px;top:87px;" width="28" height="25" viewBox="0 0 28 25"><path d="M0.6 20.2 H17.2 L20 23.4 H3.6 Z" fill="#8e8e8e"/><path d="M3.8 1.8 V15.6 H17" fill="none" stroke="#6e6e6e" stroke-width="2"/><rect x="4.4" y="1.4" width="12.6" height="14" rx="1" fill="#f6f6f6" stroke="#3a3a3a" stroke-width="1"/><path d="M18 1.6 H22.5 M18 16 H22.5 M19.5 23.2 H22.5" stroke="#555" stroke-width="0.7" stroke-dasharray="1 0.8"/><path d="M24.2 3.5 V22" stroke="#333" stroke-width="0.9"/><path d="M22.6 4.6 L24.2 1.6 L25.8 4.6 Z M22.6 14.6 L24.2 16.6 L25.8 14.6 Z M22.6 18.6 L24.2 16.6 L25.8 18.6 Z M22.6 21 L24.2 23.4 L25.8 21 Z" fill="#222"/></svg>
<div class="a" style="left:1105.2px;top:80.4px;width:93.2px;height:15.2px;background:#fff;border:1px solid #7a7a7a;"></div>
<div class="a" style="left:1105.2px;top:98.3px;width:93.2px;height:14.8px;background:#fff;border:1px solid #7a7a7a;"></div>
<span class="a t " style="top:81.54px;font-size:9.4px;line-height:14px;color:#000;-webkit-text-stroke:0.22px;letter-spacing:-0.281px;left:1108.80px;">3,000</span>
<span class="a t " style="top:99.24px;font-size:9.4px;line-height:14px;color:#000;-webkit-text-stroke:0.22px;letter-spacing:-0.281px;left:1108.80px;">0,000</span>
<div class="a" style="left:1203.3px;top:92px;width:11px;height:10.7px;background:#e1e1e1;border:1px solid #bdbdbd;"></div>
<svg class="a" style="left:1207.3px;top:94.39999999999999px;" width="3.4" height="5.8" viewBox="0 0 3.4 5.8"><path d="M0 0 L3.4 2.9 L0 5.8 Z" fill="#3a3a3a"/></svg>
<span class="a t " style="top:67.20px;font-size:7.5px;line-height:12px;color:#000;letter-spacing:-0.407px;left:1222.80px;">Paksuus:</span>
<svg class="a" style="left:1232.5px;top:87.5px;" width="16" height="19" viewBox="0 0 16 19"><path d="M5.3 11.5 V0.8 H10.3 V11.5 M0.5 11.8 H15.5" fill="none" stroke="#8e8e8e" stroke-width="0.9"/><path d="M4 16 H12 M5.6 14.6 L4 16 L5.6 17.4 M10.4 14.6 L12 16 L10.4 17.4" fill="none" stroke="#9a9a9a" stroke-width="0.8"/></svg>
<div class="a" style="left:1259.3px;top:87.4px;width:109.2px;height:15px;background:#f2f2f2;border:1px solid #d0d0d0;"></div>
<span class="a t " style="top:88.14px;font-size:9.4px;line-height:14px;color:#8a8a8a;letter-spacing:-0.331px;left:1262.50px;">0,300</span>
<span class="a t " style="top:67.20px;font-size:7.5px;line-height:12px;color:#000;letter-spacing:-0.181px;left:1376.70px;">Kaltevuuskulma:</span>
<div class="a" style="left:1377.2px;top:85.3px;width:34.8px;height:23.2px;background:#e1e1e1;border:1px solid #c4c4c4;"></div>
<svg class="a" style="left:1383px;top:90px;" width="16" height="15" viewBox="0 0 16 15"><path d="M4.5 13.5 V1 H11 V13.5" fill="#f7f7f7" stroke="#333" stroke-width="1.1"/><path d="M0.5 13.8 H15.5" stroke="#333" stroke-width="1.2"/></svg>
<svg class="a" style="left:1405px;top:93.8px;" width="3.8" height="6.0" viewBox="0 0 3.8 6.0"><path d="M0 0 L3.8 3.0 L0 6.0 Z" fill="#3a3a3a"/></svg>
<svg class="a" style="left:1421px;top:87px;" width="21" height="18" viewBox="0 0 21 18"><path d="M1 16 L5.5 3.5 H11.5 L7 16 Z" fill="none" stroke="#c2c2c2" stroke-width="0.9"/><path d="M9 16.3 H19.5" stroke="#c2c2c2" stroke-width="0.9" stroke-dasharray="1.2 1"/><path d="M10.8 1 L9.6 4.5" stroke="#c2c2c2" stroke-width="0.8" stroke-dasharray="1.2 0.8"/></svg>
<span class="a t " style="top:87.84px;font-size:12px;line-height:18px;color:#bcbcbc;left:1433.80px;">α</span>
<div class="a" style="left:1449.2px;top:87.4px;width:73px;height:15px;background:#f2f2f2;border:1px solid #d0d0d0;"></div>
<span class="a t " style="top:88.14px;font-size:9.4px;line-height:14px;color:#8a8a8a;letter-spacing:-0.357px;left:1452.50px;">90,00°</span>
<span class="a t " style="top:67.20px;font-size:7.5px;line-height:12px;color:#000;letter-spacing:-0.011px;left:1530.00px;">Profiilin muuttujat:</span>
<div class="a" style="left:1530px;top:85.3px;width:145px;height:23.2px;background:#d1d1d1;"></div>
<svg class="a" style="left:1534.5px;top:89.5px;" width="16" height="15" viewBox="0 0 16 15"><defs><pattern id="h4" width="2" height="2" patternUnits="userSpaceOnUse" patternTransform="rotate(-45)"><rect width="2" height="0.8" fill="#b4b4b4"/></pattern></defs><path d="M5.5 1 H10 L12 13 H4.5 Z" fill="url(#h4)" stroke="#b0b0b0" stroke-width="0.9"/><path d="M0.5 13.5 H15.5 M3 13.5 V10 M13.5 13.5 V10" stroke="#b0b0b0" stroke-width="0.9" fill="none"/></svg>
<span class="a t " style="top:89.84px;font-size:9.4px;line-height:14px;color:#9c9c9c;letter-spacing:0.208px;left:1553.90px;">Profiilin poikkeutusmuu...</span>
<svg class="a" style="left:1667.5px;top:93.8px;" width="3.8" height="6.0" viewBox="0 0 3.8 6.0"><path d="M0 0 L3.8 3.0 L0 6.0 Z" fill="#a8a8a8"/></svg>
<span class="a t " style="top:67.20px;font-size:7.5px;line-height:12px;color:#000;letter-spacing:-0.216px;left:1683.60px;">Pinta:</span>
<div class="a" style="left:1684px;top:85.3px;width:34.7px;height:23.2px;background:#e1e1e1;border:1px solid #c4c4c4;"></div>
<svg class="a" style="left:1692px;top:89.5px;" width="11" height="15" viewBox="0 0 11 15"><path d="M4.5 6 V2 Q5.5 0.5 6.5 2 V6 M3 6 H8 V9 H3 Z M3 9 V12.5 Q2 13.8 0.8 13.8 H7.5 Q8.5 13 8 9" fill="none" stroke="#333" stroke-width="0.9"/></svg>
<svg class="a" style="left:1709.5px;top:95.5px;" width="6" height="3.4" viewBox="0 0 6 3.4"><path d="M0 0 H6 L3.0 3.4 Z" fill="#333"/></svg>
<span class="a t " style="top:84.94px;font-size:9.4px;line-height:14px;color:#000;-webkit-text-stroke:0.22px;left:1721.60px;letter-spacing:0.35px;">Rakenne</span>
<span class="a t " style="top:95.74px;font-size:9.4px;line-height:14px;color:#000;-webkit-text-stroke:0.22px;left:1721.60px;letter-spacing:0.35px;">mukaan</span>
<div class="a" style="left:0px;top:115.5px;width:26px;height:954px;background:#f0f0f0;"></div>
<div class="a" style="left:0px;top:119px;width:13px;height:1px;background:#9a9a9a;"></div>
<svg class="a" style="left:0;top:127px" width="26" height="17" viewBox="0 0 26 17" fill="none" stroke="#3a3f42" stroke-width="0.95" stroke-linejoin="round"><path d="M2.5 1.8 L11.3 9.3 L7.6 10 L9.6 14 L7.8 15 L5.8 10.9 L2.7 13.3 Z" fill="#6f7a80" stroke="#3a3f42" stroke-width="0.9"/></svg>
<svg class="a" style="left:0;top:153px" width="26" height="15" viewBox="0 0 26 15" fill="none" stroke="#3a3f42" stroke-width="0.95" stroke-linejoin="round"><path d="M-2 1.8 H13.3 V13 H-2" stroke-dasharray="2.4 1.3" stroke="#111" stroke-width="1.1"/></svg>
<div class="a" style="left:0;top:176.4px;width:24.8px;height:15.1px;background:#dcdcdc;border-radius:0 2.5px 2.5px 0;"></div><div class="a" style="left:0;top:176.4px;width:22.6px;height:15.1px;overflow:hidden"><span class="a t" style="left:-11.41px;top:0.57px;font-size:9.6px;line-height:14px;letter-spacing:0.17px;color:#111">Suunnittelu</span></div>
<div class="a" style="left:0px;top:194.8px;width:25px;height:22px;background:#bfdaf2;"></div>
<svg class="a" style="left:0;top:197px" width="26" height="18" viewBox="0 0 26 18" fill="none" stroke="#3a3f42" stroke-width="0.95" stroke-linejoin="round"><path d="M-2 3.5 L13.5 2.6 V11 L-2 16.3" fill="#fafcfe"/></svg>
<svg class="a" style="left:0;top:222px" width="26" height="20" viewBox="0 0 26 20" fill="none" stroke="#3a3f42" stroke-width="0.95" stroke-linejoin="round"><path d="M3.6 3 Q3.6 1.4 6 1.4 Q8.4 1.4 8.4 3 L8.1 16 Q8 18.2 6 18.2 Q4 18.2 3.9 16 Z M3.6 3 Q3.8 4.4 6 4.4 Q8.2 4.4 8.4 3" fill="#fafafa"/></svg>
<svg class="a" style="left:0;top:248px" width="26" height="16" viewBox="0 0 26 16" fill="none" stroke="#3a3f42" stroke-width="0.95" stroke-linejoin="round"><path d="M-2 2.2 L14.5 8.3 V13 L-2 5.2 M14.5 8.3 L11.5 8.8 L14.5 13" /></svg>
<svg class="a" style="left:0;top:272px" width="26" height="16" viewBox="0 0 26 16" fill="none" stroke="#3a3f42" stroke-width="0.95" stroke-linejoin="round"><path d="M-2 6 L7 2.6 L16.6 7.6 L5 13.6 L-2 11.5" fill="#fafafa"/><circle cx="0.6" cy="8.2" r="0.6" fill="#333"/></svg>
<svg class="a" style="left:0;top:296px" width="26" height="19" viewBox="0 0 26 19" fill="none" stroke="#3a3f42" stroke-width="0.95" stroke-linejoin="round"><path d="M-2 3 L11 2 L16.6 11 L8 9 L3 16.6 L-2 14.8 M11 2 L8 9"/></svg>
<svg class="a" style="left:0;top:321px" width="26" height="20" viewBox="0 0 26 20" fill="none" stroke="#3a3f42" stroke-width="0.95" stroke-linejoin="round"><path d="M-2 10.6 L16 2.6 L13.6 15.6 L8 12.6 L2.2 17.6 L-2 15.6 M16 2.6 L8 12.6"/></svg>
<svg class="a" style="left:0;top:346px" width="26" height="18" viewBox="0 0 26 18" fill="none" stroke="#3a3f42" stroke-width="0.95" stroke-linejoin="round"><path d="M-1 4.5 L4 2.5 L9 4.8 L4.5 6.8 Z M1.5 7.5 L6.5 5.6 L11.5 8 L6.8 10 Z M4 10.6 L9 8.7 L15 11.6 L7.5 15.5 L2 12.8 M4.5 6.8 V8.4 M6.8 10 V11.6 M9 4.8 V6.3 M11.5 8 V9.7"/></svg>
<svg class="a" style="left:0;top:372px" width="26" height="14" viewBox="0 0 26 14" fill="none" stroke="#3a3f42" stroke-width="0.95" stroke-linejoin="round"><path d="M-2 7.5 L14.5 2.2 V9 M-2 10.8 L14.5 5 M6 5 V12.5"/></svg>
<svg class="a" style="left:0;top:396px" width="26" height="18" viewBox="0 0 26 18" fill="none" stroke="#3a3f42" stroke-width="0.95" stroke-linejoin="round"><path d="M-2 3 L14.5 1.8 V14.6 L-2 17 M-2 8 L14.5 6.2 M-2 12.4 L14.5 10.4 M4 2.6 V16 M9.5 2.2 V15.3"/></svg>
<svg class="a" style="left:0;top:420px" width="26" height="21" viewBox="0 0 26 21" fill="none" stroke="#3a3f42" stroke-width="0.95" stroke-linejoin="round"><path d="M2 4.2 L10.4 1.8 V15.8 L2 19.2 Z" fill="#fafafa"/><path d="M4 11 H5.4"/></svg>
<svg class="a" style="left:0;top:447px" width="26" height="16" viewBox="0 0 26 16" fill="none" stroke="#3a3f42" stroke-width="0.95" stroke-linejoin="round"><path d="M-2 4 L12 2.3 V12 L-2 14.8 M-2 9 L12 7 M6.3 3 V13.2"/></svg>
<svg class="a" style="left:0;top:471px" width="26" height="18" viewBox="0 0 26 18" fill="none" stroke="#3a3f42" stroke-width="0.95" stroke-linejoin="round"><path d="M-1 5.5 L6 2.5 L15 7 L8 10.5 Z M1 8.5 L8 5.5 L15.5 10.5 L7 15 L0 11"/></svg>
<svg class="a" style="left:0;top:496px" width="26" height="17" viewBox="0 0 26 17" fill="none" stroke="#3a3f42" stroke-width="0.95" stroke-linejoin="round"><path d="M-2 3.6 L12 2 V13 L-2 15.6 M6.5 2.6 V9.8 L12 13 M6.5 9.8 L-2 12.2"/></svg>
<svg class="a" style="left:0;top:521px" width="26" height="18" viewBox="0 0 26 18" fill="none" stroke="#3a3f42" stroke-width="0.95" stroke-linejoin="round"><path d="M-1 2 H3 V4 H9 V2 L10.5 2 V7 H14.5 V16 H11 V14.5 H2.5 V16 H-1 M3 2 Q6 0.8 9 2 M3 9.5 H9 M3 11.6 H9"/></svg>
<svg class="a" style="left:0;top:546px" width="26" height="17" viewBox="0 0 26 17" fill="none" stroke="#3a3f42" stroke-width="0.95" stroke-linejoin="round"><path d="M-1 6 Q6 0.5 10 3 Q14 6 16.6 9.6 L8 15.2 Q3 9.5 -1 9.6 M3.5 3.3 Q9 6.5 12.5 12.2 M-1 7.8 Q7 4.5 13.5 6 M3 9.5 Q9 8 14.8 8.2 M6.5 2.2 Q5 6 4.5 11"/></svg>
<svg class="a" style="left:0;top:569px" width="26" height="20" viewBox="0 0 26 20" fill="none" stroke="#3a3f42" stroke-width="0.95" stroke-linejoin="round"><path d="M-1 8 L7.5 2 L11 9 Q11.5 12 13 14.5 L7 18.6 L-1 15 M7.5 2 Q6 10 7 18.6 M11 9 Q9 9.5 7 18.6"/></svg>
<svg class="a" style="left:0;top:594px" width="26" height="20" viewBox="0 0 26 20" fill="none" stroke="#3a3f42" stroke-width="0.95" stroke-linejoin="round"><path d="M1.5 17.5 V3 Q3 1.2 5.2 2.6 V10 L12.6 12.5 V19 M5.2 10 L1.5 11.4 L8.2 14.2 L12.6 12.5 M8.2 14.2 V19.5 M5.2 12.9 V16.5"/></svg>
<svg class="a" style="left:0;top:619px" width="26" height="21" viewBox="0 0 26 21" fill="none" stroke="#3a3f42" stroke-width="0.95" stroke-linejoin="round"><circle cx="5.6" cy="8.6" r="4.6" fill="#fafafa"/><path d="M4 13 V16.6 H7.2 V13 M4 9 Q4.8 7 5.6 9 Q6.4 10.6 7.2 8.6 M11 5.5 L13.2 3.5 M11.6 9 H14 M10.6 12.2 L12.6 14 M-1 5.5 L0.5 6.5"/></svg>
<svg class="a" style="left:0;top:644px" width="26" height="20" viewBox="0 0 26 20" fill="none" stroke="#3a3f42" stroke-width="0.95" stroke-linejoin="round"><path d="M0 5.5 L5.5 2 L10.6 6.3 V15 L5.5 18.6 L0 15 Z M0 5.5 L5.5 9.6 L10.6 6.3 M5.5 9.6 V18.6 M3 16.8 V18.6 M7.5 17.3 V18.8"/><circle cx="5.3" cy="5.6" r="0.6" fill="#333"/></svg>
<svg class="a" style="left:0;top:670px" width="26" height="18" viewBox="0 0 26 18" fill="none" stroke="#3a3f42" stroke-width="0.95" stroke-linejoin="round"><path d="M-1 4.4 L7 3 L15.6 3.5 V13 L7 15.8 L-1 15 M-1 9.6 L7 9 L15.6 8.3 M7 3 V15.8 M3 3.7 V15.4 M11.5 3.3 V14.4"/></svg>
<svg class="a" style="left:0;top:694px" width="26" height="18" viewBox="0 0 26 18" fill="none" stroke="#3a3f42" stroke-width="0.95" stroke-linejoin="round"><path d="M-1 5.5 L6.5 4.5 L13.6 3.6 V11 L6.5 14 L-1 16.6 M6.5 4.5 V14"/></svg>
<div class="a" style="left:0;top:720.3px;width:24.8px;height:15.5px;background:#dcdcdc;border-radius:0 2.5px 2.5px 0;"></div><div class="a" style="left:0;top:720.3px;width:23.0px;height:15.5px;overflow:hidden"><span class="a t" style="left:-12.22px;top:1.67px;font-size:9.6px;line-height:14px;letter-spacing:-0.1px;color:#111">Katselupiste</span></div>
<svg class="a" style="left:0;top:744px" width="26" height="14" viewBox="0 0 26 14" fill="none" stroke="#3a3f42" stroke-width="0.95" stroke-linejoin="round"><path d="M-1 6.2 H7.3 V11.4 H16.5"/><path d="M10.8 10.4 L13.2 6.8 L15.6 10.4 Z" fill="#222" stroke="none"/></svg>
<svg class="a" style="left:0;top:766px" width="26" height="14" viewBox="0 0 26 14" fill="none" stroke="#3a3f42" stroke-width="0.95" stroke-linejoin="round"><path d="M-1 12.2 H16.5"/><path d="M3 10.6 L6 6 L9 10.6 Z" fill="#222" stroke="none"/></svg>
<svg class="a" style="left:0;top:790px" width="26" height="20" viewBox="0 0 26 20" fill="none" stroke="#3a3f42" stroke-width="0.95" stroke-linejoin="round"><circle cx="5.5" cy="10.6" r="3.2" stroke-width="1.1"/><path d="M3.9 5.6 L5.5 3.2 L7.1 5.6 Z M3.9 15.6 L5.5 18 L7.1 15.6 Z M10.8 9 L13.2 10.6 L10.8 12.2 Z" fill="#333" stroke="none"/><path d="M-1 10.6 H0.6" stroke-width="1.2"/></svg>
<svg class="a" style="left:0;top:815px" width="26" height="20" viewBox="0 0 26 20" fill="none" stroke="#3a3f42" stroke-width="0.95" stroke-linejoin="round"><circle cx="5.9" cy="10.1" r="6.6" stroke-width="1.05"/><path d="M4.4 3.8 V16.4 M4.4 7.6 H12 M4.4 12.6 H12"/></svg>
<svg class="a" style="left:0;top:842px" width="26" height="19" viewBox="0 0 26 19" fill="none" stroke="#3a3f42" stroke-width="0.95" stroke-linejoin="round"><path d="M-1 2.6 H10.5 L16.2 7.5 V15.3 Q16.2 16.6 15 16.6 H-1 M10.5 2.6 V7.5 H16.2 M0 12.5 L7.5 5.8 L9 7.4 L1.5 13.5 M4 13 H11.5"/></svg>
<svg class="a" style="left:0;top:867px" width="26" height="19" viewBox="0 0 26 19" fill="none" stroke="#3a3f42" stroke-width="0.95" stroke-linejoin="round"><path d="M-1 2.4 H10 V8.6 H-1 M10 4.5 L13 2.6 V8.4 L10 6.6 M13.6 2.4 V8.6 M6 8.6 V16 M6 9.6 L0 15.5 M6 9.6 L12 15.5"/></svg>
<div class="a" style="left:0;top:891.2px;width:24.8px;height:15.8px;background:#dcdcdc;border-radius:0 2.5px 2.5px 0;"></div><div class="a" style="left:0;top:891.2px;width:23.0px;height:15.8px;overflow:hidden"><span class="a t" style="left:-12.21px;top:1.17px;font-size:9.6px;line-height:14px;letter-spacing:0.18px;color:#111">Dokumentointi</span></div>
<svg class="a" style="left:0;top:915px" width="26" height="18" viewBox="0 0 26 18" fill="none" stroke="#3a3f42" stroke-width="0.95" stroke-linejoin="round"><path d="M-1 9.6 H15.4 M12.4 6.5 V12.8"/></svg>
<span class="a t " style="top:915.13px;font-size:5.4px;line-height:9px;color:#222;font-weight:bold;letter-spacing:0.347px;left:1.60px;">1.2</span>
<svg class="a" style="left:0;top:936px" width="26" height="22" viewBox="0 0 26 22" fill="none" stroke="#3a3f42" stroke-width="0.95" stroke-linejoin="round"><circle cx="5.2" cy="10.6" r="5.3"/><path d="M5.2 3 V18.5 M-2 10.6 H13"/></svg>
<span class="a t " style="top:935.03px;font-size:5.4px;line-height:9px;color:#222;font-weight:bold;letter-spacing:-0.103px;left:9.50px;">1.2</span>
<svg class="a" style="left:0;top:960px" width="26" height="22" viewBox="0 0 26 22" fill="none" stroke="#3a3f42" stroke-width="0.95" stroke-linejoin="round"><path d="M0.5 9.5 Q4.5 13.5 5.6 19.8 M3.8 12.4 L12 6.4 M7 8.2 H15"/><path d="M2.6 13.2 L4.2 9.8 L6.4 12.6 Z" fill="#222" stroke="none"/></svg>
<span class="a t " style="top:960.93px;font-size:5.4px;line-height:9px;color:#222;font-weight:bold;letter-spacing:-0.353px;left:7.80px;">1.2</span>
<svg class="a" style="left:0;top:988px" width="26" height="18" viewBox="0 0 26 18" fill="none" stroke="#3a3f42" stroke-width="0.95" stroke-linejoin="round"><path d="M0 9.6 L6.5 3.4 M-1 14.4 H13 M3.2 7 Q7.4 8.6 8 12.6"/><path d="M2.4 6.2 L5.4 6.6 L4 9 Z M6.4 12 L9.6 12.2 L8 14.2 Z" fill="#222" stroke="none"/></svg>
<span class="a t " style="top:984.52px;font-size:11.5px;line-height:17px;color:#333;left:9.80px;">α</span>
<span class="a t " style="top:1008.38px;font-size:19.4px;line-height:27px;color:#5a5a5a;left:-0.80px;">A</span>
<svg class="a" style="left:0;top:1040px" width="26" height="12" viewBox="0 0 26 12" fill="none" stroke="#3a3f42" stroke-width="0.95" stroke-linejoin="round"><path d="M-1 6.6 Q1.5 4.4 4 4.6"/></svg>
<span class="a t " style="top:1038.02px;font-size:11.2px;line-height:17px;color:#333;letter-spacing:-1.100px;left:4.60px;">A1</span>
<svg class="a" style="left:0;top:1062px" width="26" height="8" viewBox="0 0 26 8" fill="none" stroke="#3a3f42" stroke-width="0.95" stroke-linejoin="round"><circle cx="5.5" cy="6.8" r="5"/><path d="M4 7 L7 4"/></svg>
<div class="a" style="left:1713px;top:115.5px;width:40px;height:954px;background:#fff;"></div>
<div class="a" style="left:1713px;top:115.5px;width:40px;height:78px;background:#f0f0f0;"></div>
<div class="a" style="left:1712.5px;top:134px;width:1.2px;height:935px;background:#e3e3e3;"></div>
<div class="a" style="left:1713px;top:912.8px;width:40px;height:157px;background:#f0f0f0;"></div>
<svg class="a" style="left:1719.5px;top:129.8px;" width="17" height="13" viewBox="0 0 17 13"><path d="M1 11.5 V5.5 L5.5 1 L14.5 5.2 V11.5 Z M5.5 1 L8.5 5.8 V11.5 M8.5 5.8 L14.5 5.2" fill="#fafafa" stroke="#333" stroke-width="1"/></svg>
<div class="a" style="left:1744px;top:128px;width:1px;height:15px;background:#c2c2c2;"></div>
<div class="a" style="left:1716px;top:153.4px;width:17.3px;height:17px;background:#e1e1e1;border:1px solid #c6c6c6;"></div>
<svg class="a" style="left:1718.5px;top:156px;" width="13" height="12" viewBox="0 0 13 12"><path d="M1 10.5 H3.5 Q6.5 10.5 7 5 V2 M4.3 4.6 L7 1.6 L9.8 4.6" fill="none" stroke="#333" stroke-width="1"/></svg>
<div class="a" style="left:1736.3px;top:153.4px;width:17.3px;height:17px;background:#e1e1e1;border:1px solid #c6c6c6;"></div>
<svg class="a" style="left:1739px;top:156px;" width="13" height="12" viewBox="0 0 13 12"><path d="M3.5 1 H12.5 V9 Q12.5 11 10 11 H3 Q1 11 1 9 V3 H10 V9.5" fill="none" stroke="#333" stroke-width="1"/></svg>
<div class="a" style="left:1715px;top:173.6px;width:40px;height:18px;background:#fff;border:1px solid #8a8a8a;"></div>
<span class="a t " style="top:175.74px;font-size:9.4px;line-height:14px;color:#6a6a6a;left:1718.60px;letter-spacing:0.45px;">Hae kohteita</span>
<div class="a" style="left:1713px;top:249px;width:40px;height:17.6px;background:#d9d9d9;"></div>
<svg class="a" style="left:1719.2px;top:202.0px;" width="8" height="6" viewBox="0 0 8 6"><path d="M0.6 0.8 L4 4.4 L7.4 0.8" fill="none" stroke="#222" stroke-width="1.7"/></svg>
<svg class="a" style="left:1730px;top:197px;" width="16" height="14" viewBox="0 0 16 14"><rect x="0.8" y="0.8" width="14.2" height="10.6" rx="1.2" fill="#d9e8f6" stroke="#27323c" stroke-width="1.2"/><path d="M3 5.8 L6 2.3 L13.4 6.8 V9.4 H5 M9.6 4.6 V9.4" fill="none" stroke="#27323c" stroke-width="0.9"/><rect x="10.6" y="7" width="1.8" height="1.5" fill="#fff"/><path d="M1.5 12.6 Q0.8 8.8 3.4 8.6" fill="none" stroke="#fff" stroke-width="2.6"/><path d="M2.4 6 L5.8 8.2 L3.2 10.8 Z" fill="#fff" stroke="#fff" stroke-width="1"/><path d="M1.5 12.8 Q0.8 8.8 3.4 8.6" fill="none" stroke="#17222c" stroke-width="1.4"/><path d="M2.6 6.6 L5.2 8.2 L3.2 10.2 Z" fill="#17222c"/></svg>
<span class="a t " style="top:197.14px;font-size:9.4px;line-height:14px;color:#2a2360;left:1749.40px;">Nimetön</span>
<svg class="a" style="left:1738.6px;top:214.4px;" width="15" height="15" viewBox="0 0 15 15"><path d="M3 0.8 H11.2 Q12.8 0.8 12.8 2.4 V12.6 Q12.8 14.2 11.2 14.2 H3 Z" fill="#fff" stroke="#2f2f2f" stroke-width="1.1"/><rect x="2.6" y="2.3" width="8.2" height="2.1" fill="#b5502e"/><rect x="2.6" y="4.2" width="8.2" height="0.7" fill="#3a3a3a"/><rect x="0" y="6.2" width="12.2" height="6" fill="#fff"/></svg>
<span class="a t " style="top:218.37px;font-size:7.0px;line-height:11px;color:#e8742c;font-weight:bold;letter-spacing:-0.800px;left:1739.00px;">PDF</span>
<svg class="a" style="left:1727.2px;top:238.39999999999998px;" width="8" height="6" viewBox="0 0 8 6"><path d="M0.6 0.8 L4 4.4 L7.4 0.8" fill="none" stroke="#222" stroke-width="1.7"/></svg>
<svg class="a" style="left:1738.6px;top:233.6px;" width="14" height="14" viewBox="0 0 14 14"><path d="M1 0.8 H6 V4.6 H13.5 V11.8 H1 Z" fill="#d9e8f6" stroke="#27323c" stroke-width="1"/><path d="M3 0.8 V3 M3 2 H4.5" stroke="#27323c" stroke-width="0.8" fill="none"/><path d="M1.5 12.6 Q0.8 8.8 3.4 8.6" fill="none" stroke="#fff" stroke-width="2.6"/><path d="M2.4 6 L5.8 8.2 L3.2 10.8 Z" fill="#fff" stroke="#fff" stroke-width="1"/><path d="M1.5 12.8 Q0.8 8.8 3.4 8.6" fill="none" stroke="#17222c" stroke-width="1.4"/><path d="M2.6 6.6 L5.2 8.2 L3.2 10.2 Z" fill="#17222c"/></svg>
<svg class="a" style="left:1746.8px;top:250.8px;" width="14" height="14" viewBox="0 0 14 14"><path d="M2.5 0.8 H8 L12.2 4.5 V11.5 Q12.2 13.2 10.5 13.2 H2.5 Z" fill="#fff" stroke="#333" stroke-width="0.9"/><rect x="0" y="5.4" width="11" height="5.6" fill="#d9d9d9"/></svg>
<span class="a t " style="top:254.96px;font-size:5.6px;line-height:9px;color:#222;font-weight:bold;letter-spacing:-0.543px;left:1746.20px;">DWG</span>
<svg class="a" style="left:1746.8px;top:269px;" width="15" height="15" viewBox="0 0 15 15"><path d="M3 0.8 H11.2 Q12.8 0.8 12.8 2.4 V12.6 Q12.8 14.2 11.2 14.2 H3 Z" fill="#fff" stroke="#2f2f2f" stroke-width="1.1"/><rect x="2.6" y="2.3" width="8.2" height="2.1" fill="#b5502e"/><rect x="2.6" y="4.2" width="8.2" height="0.7" fill="#3a3a3a"/><rect x="0" y="6.2" width="12.2" height="6" fill="#fff"/></svg>
<span class="a t " style="top:272.97px;font-size:7.0px;line-height:11px;color:#e8742c;font-weight:bold;letter-spacing:-0.800px;left:1747.20px;">PDF</span>
<svg class="a" style="left:1746.8px;top:287.3px;" width="15" height="15" viewBox="0 0 15 15"><path d="M3 0.8 H11.2 Q12.8 0.8 12.8 2.4 V12.6 Q12.8 14.2 11.2 14.2 H3 Z" fill="#fff" stroke="#2f2f2f" stroke-width="1.1"/><rect x="2.6" y="2.3" width="8.2" height="2.1" fill="#b5502e"/><rect x="2.6" y="4.2" width="8.2" height="0.7" fill="#3a3a3a"/><rect x="0" y="6.2" width="12.2" height="6" fill="#fff"/></svg>
<span class="a t " style="top:291.27px;font-size:7.0px;line-height:11px;color:#e8742c;font-weight:bold;letter-spacing:-0.800px;left:1747.20px;">PDF</span>
<svg class="a" style="left:1727.2px;top:311.40000000000003px;" width="8" height="6" viewBox="0 0 8 6"><path d="M0.6 0.8 L4 4.4 L7.4 0.8" fill="none" stroke="#222" stroke-width="1.7"/></svg>
<svg class="a" style="left:1738.6px;top:306.6px;" width="14" height="14" viewBox="0 0 14 14"><path d="M1 0.8 H6 V4.6 H13.5 V11.8 H1 Z" fill="#d9e8f6" stroke="#27323c" stroke-width="1"/><path d="M3 0.8 V3 M3 2 H4.5" stroke="#27323c" stroke-width="0.8" fill="none"/><path d="M1.5 12.6 Q0.8 8.8 3.4 8.6" fill="none" stroke="#fff" stroke-width="2.6"/><path d="M2.4 6 L5.8 8.2 L3.2 10.8 Z" fill="#fff" stroke="#fff" stroke-width="1"/><path d="M1.5 12.8 Q0.8 8.8 3.4 8.6" fill="none" stroke="#17222c" stroke-width="1.4"/><path d="M2.6 6.6 L5.2 8.2 L3.2 10.2 Z" fill="#17222c"/></svg>
<svg class="a" style="left:1746.8px;top:324px;" width="15" height="15" viewBox="0 0 15 15"><path d="M3 0.8 H11.2 Q12.8 0.8 12.8 2.4 V12.6 Q12.8 14.2 11.2 14.2 H3 Z" fill="#fff" stroke="#2f2f2f" stroke-width="1.1"/><rect x="2.6" y="2.3" width="8.2" height="2.1" fill="#b5502e"/><rect x="2.6" y="4.2" width="8.2" height="0.7" fill="#3a3a3a"/><rect x="0" y="6.2" width="12.2" height="6" fill="#fff"/></svg>
<span class="a t " style="top:327.97px;font-size:7.0px;line-height:11px;color:#e8742c;font-weight:bold;letter-spacing:-0.800px;left:1747.20px;">PDF</span>
<svg class="a" style="left:1746.8px;top:342.3px;" width="15" height="15" viewBox="0 0 15 15"><path d="M3 0.8 H11.2 Q12.8 0.8 12.8 2.4 V12.6 Q12.8 14.2 11.2 14.2 H3 Z" fill="#fff" stroke="#2f2f2f" stroke-width="1.1"/><rect x="2.6" y="2.3" width="8.2" height="2.1" fill="#b5502e"/><rect x="2.6" y="4.2" width="8.2" height="0.7" fill="#3a3a3a"/><rect x="0" y="6.2" width="12.2" height="6" fill="#fff"/></svg>
<span class="a t " style="top:346.27px;font-size:7.0px;line-height:11px;color:#e8742c;font-weight:bold;letter-spacing:-0.800px;left:1747.20px;">PDF</span>
<svg class="a" style="left:1746.8px;top:360.6px;" width="15" height="15" viewBox="0 0 15 15"><path d="M3 0.8 H11.2 Q12.8 0.8 12.8 2.4 V12.6 Q12.8 14.2 11.2 14.2 H3 Z" fill="#fff" stroke="#2f2f2f" stroke-width="1.1"/><rect x="2.6" y="2.3" width="8.2" height="2.1" fill="#b5502e"/><rect x="2.6" y="4.2" width="8.2" height="0.7" fill="#3a3a3a"/><rect x="0" y="6.2" width="12.2" height="6" fill="#fff"/></svg>
<span class="a t " style="top:364.57px;font-size:7.0px;line-height:11px;color:#e8742c;font-weight:bold;letter-spacing:-0.800px;left:1747.20px;">PDF</span>
<svg class="a" style="left:1728.7px;top:383.4px;" width="5" height="8" viewBox="0 0 5 8"><path d="M0.6 0.6 L3.8 3.8 L0.6 7" fill="none" stroke="#9a9a9a" stroke-width="1.5"/></svg>
<svg class="a" style="left:1738.6px;top:380px;" width="14" height="14" viewBox="0 0 14 14"><path d="M1 0.8 H6 V4.6 H13.5 V11.8 H1 Z" fill="#d9e8f6" stroke="#27323c" stroke-width="1"/><path d="M3 0.8 V3 M3 2 H4.5" stroke="#27323c" stroke-width="0.8" fill="none"/><path d="M1.5 12.6 Q0.8 8.8 3.4 8.6" fill="none" stroke="#fff" stroke-width="2.6"/><path d="M2.4 6 L5.8 8.2 L3.2 10.8 Z" fill="#fff" stroke="#fff" stroke-width="1"/><path d="M1.5 12.8 Q0.8 8.8 3.4 8.6" fill="none" stroke="#17222c" stroke-width="1.4"/><path d="M2.6 6.6 L5.2 8.2 L3.2 10.2 Z" fill="#17222c"/></svg>
<svg class="a" style="left:1738.6px;top:398.3px;" width="14" height="14" viewBox="0 0 14 14"><path d="M0.5 5 L7.5 1 L14 4.5" fill="none" stroke="#27323c" stroke-width="1"/><path d="M1.5 5.5 H14 V11 H1.5 Z" fill="#d9e8f6"/><path d="M1.5 11.4 H14" stroke="#27323c" stroke-width="1"/><path d="M1.5 12.6 Q0.8 8.8 3.4 8.6" fill="none" stroke="#fff" stroke-width="2.6"/><path d="M2.4 6 L5.8 8.2 L3.2 10.8 Z" fill="#fff" stroke="#fff" stroke-width="1"/><path d="M1.5 12.8 Q0.8 8.8 3.4 8.6" fill="none" stroke="#17222c" stroke-width="1.4"/><path d="M2.6 6.6 L5.2 8.2 L3.2 10.2 Z" fill="#17222c"/></svg>
<svg class="a" style="left:1727.2px;top:421.40000000000003px;" width="8" height="6" viewBox="0 0 8 6"><path d="M0.6 0.8 L4 4.4 L7.4 0.8" fill="none" stroke="#222" stroke-width="1.7"/></svg>
<svg class="a" style="left:1738.6px;top:416.6px;" width="14" height="14" viewBox="0 0 14 14"><path d="M0.5 5 L7.5 1 L14 4.5" fill="none" stroke="#27323c" stroke-width="1"/><path d="M1.5 5.5 H14 V11 H1.5 Z" fill="#d9e8f6"/><path d="M1.5 11.4 H14" stroke="#27323c" stroke-width="1"/><path d="M1.5 12.6 Q0.8 8.8 3.4 8.6" fill="none" stroke="#fff" stroke-width="2.6"/><path d="M2.4 6 L5.8 8.2 L3.2 10.8 Z" fill="#fff" stroke="#fff" stroke-width="1"/><path d="M1.5 12.8 Q0.8 8.8 3.4 8.6" fill="none" stroke="#17222c" stroke-width="1.4"/><path d="M2.6 6.6 L5.2 8.2 L3.2 10.2 Z" fill="#17222c"/></svg>
<svg class="a" style="left:1746.8px;top:433.2px;" width="15" height="15" viewBox="0 0 15 15"><path d="M3 0.8 H11.2 Q12.8 0.8 12.8 2.4 V12.6 Q12.8 14.2 11.2 14.2 H3 Z" fill="#fff" stroke="#2f2f2f" stroke-width="1.1"/><rect x="2.6" y="2.3" width="8.2" height="2.1" fill="#b5502e"/><rect x="2.6" y="4.2" width="8.2" height="0.7" fill="#3a3a3a"/><rect x="0" y="6.2" width="12.2" height="6" fill="#fff"/></svg>
<span class="a t " style="top:437.17px;font-size:7.0px;line-height:11px;color:#e8742c;font-weight:bold;letter-spacing:-0.800px;left:1747.20px;">PDF</span>
<svg class="a" style="left:1746.8px;top:451.3px;" width="15" height="15" viewBox="0 0 15 15"><path d="M3 0.8 H11.2 Q12.8 0.8 12.8 2.4 V12.6 Q12.8 14.2 11.2 14.2 H3 Z" fill="#fff" stroke="#2f2f2f" stroke-width="1.1"/><rect x="2.6" y="2.3" width="8.2" height="2.1" fill="#b5502e"/><rect x="2.6" y="4.2" width="8.2" height="0.7" fill="#3a3a3a"/><rect x="0" y="6.2" width="12.2" height="6" fill="#fff"/></svg>
<span class="a t " style="top:455.27px;font-size:7.0px;line-height:11px;color:#e8742c;font-weight:bold;letter-spacing:-0.800px;left:1747.20px;">PDF</span>
<svg class="a" style="left:1746.8px;top:469.6px;" width="15" height="15" viewBox="0 0 15 15"><path d="M3 0.8 H11.2 Q12.8 0.8 12.8 2.4 V12.6 Q12.8 14.2 11.2 14.2 H3 Z" fill="#fff" stroke="#2f2f2f" stroke-width="1.1"/><rect x="2.6" y="2.3" width="8.2" height="2.1" fill="#b5502e"/><rect x="2.6" y="4.2" width="8.2" height="0.7" fill="#3a3a3a"/><rect x="0" y="6.2" width="12.2" height="6" fill="#fff"/></svg>
<span class="a t " style="top:473.57px;font-size:7.0px;line-height:11px;color:#e8742c;font-weight:bold;letter-spacing:-0.800px;left:1747.20px;">PDF</span>
<svg class="a" style="left:1746.8px;top:487.6px;" width="15" height="15" viewBox="0 0 15 15"><path d="M3 0.8 H11.2 Q12.8 0.8 12.8 2.4 V12.6 Q12.8 14.2 11.2 14.2 H3 Z" fill="#fff" stroke="#2f2f2f" stroke-width="1.1"/><rect x="2.6" y="2.3" width="8.2" height="2.1" fill="#b5502e"/><rect x="2.6" y="4.2" width="8.2" height="0.7" fill="#3a3a3a"/><rect x="0" y="6.2" width="12.2" height="6" fill="#fff"/></svg>
<span class="a t " style="top:491.57px;font-size:7.0px;line-height:11px;color:#e8742c;font-weight:bold;letter-spacing:-0.800px;left:1747.20px;">PDF</span>
<svg class="a" style="left:1738.6px;top:506.6px;" width="14" height="14" viewBox="0 0 14 14"><path d="M1 1 H14 V11.6 H1 Z" fill="#d9e8f6" stroke="#27323c" stroke-width="1"/><path d="M3 11 V4 H6.5 V11 M9 3.5 H12 V6.5 H9 Z" fill="none" stroke="#27323c" stroke-width="0.9"/><path d="M1.5 12.6 Q0.8 8.8 3.4 8.6" fill="none" stroke="#fff" stroke-width="2.6"/><path d="M2.4 6 L5.8 8.2 L3.2 10.8 Z" fill="#fff" stroke="#fff" stroke-width="1"/><path d="M1.5 12.8 Q0.8 8.8 3.4 8.6" fill="none" stroke="#17222c" stroke-width="1.4"/><path d="M2.6 6.6 L5.2 8.2 L3.2 10.2 Z" fill="#17222c"/></svg>
<svg class="a" style="left:1738.6px;top:525px;" width="14" height="14" viewBox="0 0 14 14"><path d="M1 1 H10 L14 4 V11.6 H1 Z" fill="#d9e8f6" stroke="#27323c" stroke-width="1"/><path d="M4.5 8.5 L9 3.8 L10.2 5 L5.6 9.4 M5 10 H13" fill="none" stroke="#27323c" stroke-width="0.9"/><path d="M1.5 12.6 Q0.8 8.8 3.4 8.6" fill="none" stroke="#fff" stroke-width="2.6"/><path d="M2.4 6 L5.8 8.2 L3.2 10.8 Z" fill="#fff" stroke="#fff" stroke-width="1"/><path d="M1.5 12.8 Q0.8 8.8 3.4 8.6" fill="none" stroke="#17222c" stroke-width="1.4"/><path d="M2.6 6.6 L5.2 8.2 L3.2 10.2 Z" fill="#17222c"/></svg>
<svg class="a" style="left:1738.6px;top:543.3px;" width="14" height="14" viewBox="0 0 14 14"><circle cx="7" cy="6.8" r="6" fill="#d9e8f6" stroke="#27323c" stroke-width="1" stroke-dasharray="3 0.8"/><path d="M6 1 V12.6 M6 4.6 H13 M6 8.8 H13" fill="none" stroke="#27323c" stroke-width="0.9"/><path d="M1.5 12.6 Q0.8 8.8 3.4 8.6" fill="none" stroke="#fff" stroke-width="2.6"/><path d="M2.4 6 L5.8 8.2 L3.2 10.8 Z" fill="#fff" stroke="#fff" stroke-width="1"/><path d="M1.5 12.8 Q0.8 8.8 3.4 8.6" fill="none" stroke="#17222c" stroke-width="1.4"/><path d="M2.6 6.6 L5.2 8.2 L3.2 10.2 Z" fill="#17222c"/></svg>
<svg class="a" style="left:1738.6px;top:561.6px;" width="14" height="14" viewBox="0 0 14 14"><path d="M1 1 H10 L14 4 V11.6 H1 Z" fill="#d9e8f6" stroke="#27323c" stroke-width="1"/><path d="M4 10 V5 Q4 3.5 6 3.5 H10.5 V9.5 H6.5 V6 H10.5" fill="none" stroke="#27323c" stroke-width="0.9"/><path d="M1.5 12.6 Q0.8 8.8 3.4 8.6" fill="none" stroke="#fff" stroke-width="2.6"/><path d="M2.4 6 L5.8 8.2 L3.2 10.8 Z" fill="#fff" stroke="#fff" stroke-width="1"/><path d="M1.5 12.8 Q0.8 8.8 3.4 8.6" fill="none" stroke="#17222c" stroke-width="1.4"/><path d="M2.6 6.6 L5.2 8.2 L3.2 10.2 Z" fill="#17222c"/></svg>
<svg class="a" style="left:1728.7px;top:583.4px;" width="5" height="8" viewBox="0 0 5 8"><path d="M0.6 0.6 L3.8 3.8 L0.6 7" fill="none" stroke="#9a9a9a" stroke-width="1.5"/></svg>
<svg class="a" style="left:1738.6px;top:580px;" width="14" height="14" viewBox="0 0 14 14"><path d="M1 0.8 H5 L6.3 2.4 H14 V11.8 H1 Z" fill="#e6e6e6" stroke="#27323c" stroke-width="1"/><path d="M1.5 12.6 Q0.8 8.8 3.4 8.6" fill="none" stroke="#fff" stroke-width="2.6"/><path d="M2.4 6 L5.8 8.2 L3.2 10.8 Z" fill="#fff" stroke="#fff" stroke-width="1"/><path d="M1.5 12.8 Q0.8 8.8 3.4 8.6" fill="none" stroke="#17222c" stroke-width="1.4"/><path d="M2.6 6.6 L5.2 8.2 L3.2 10.2 Z" fill="#17222c"/></svg>
<svg class="a" style="left:1727.2px;top:603.0000000000001px;" width="8" height="6" viewBox="0 0 8 6"><path d="M0.6 0.8 L4 4.4 L7.4 0.8" fill="none" stroke="#222" stroke-width="1.7"/></svg>
<svg class="a" style="left:1738.6px;top:598.2px;" width="14" height="14" viewBox="0 0 14 14"><path d="M1 0.8 H5 L6.3 2.4 H14 V11.8 H1 Z" fill="#e6e6e6" stroke="#27323c" stroke-width="1"/><path d="M1.5 12.6 Q0.8 8.8 3.4 8.6" fill="none" stroke="#fff" stroke-width="2.6"/><path d="M2.4 6 L5.8 8.2 L3.2 10.8 Z" fill="#fff" stroke="#fff" stroke-width="1"/><path d="M1.5 12.8 Q0.8 8.8 3.4 8.6" fill="none" stroke="#17222c" stroke-width="1.4"/><path d="M2.6 6.6 L5.2 8.2 L3.2 10.2 Z" fill="#17222c"/></svg>
<svg class="a" style="left:1746.8px;top:615px;" width="15" height="15" viewBox="0 0 15 15"><path d="M3 0.8 H11.2 Q12.8 0.8 12.8 2.4 V12.6 Q12.8 14.2 11.2 14.2 H3 Z" fill="#fff" stroke="#2f2f2f" stroke-width="1.1"/><rect x="2.6" y="2.3" width="8.2" height="2.1" fill="#b5502e"/><rect x="2.6" y="4.2" width="8.2" height="0.7" fill="#3a3a3a"/><rect x="0" y="6.2" width="12.2" height="6" fill="#fff"/></svg>
<span class="a t " style="top:618.97px;font-size:7.0px;line-height:11px;color:#e8742c;font-weight:bold;letter-spacing:-0.800px;left:1747.20px;">PDF</span>
<svg class="a" style="left:1719.5px;top:916.5px;" width="18" height="18" viewBox="0 0 18 18"><path d="M1.5 6.5 H6 L7 8 H13.5 V15.5 H1.5 Z" fill="none" stroke="#333" stroke-width="1"/><circle cx="12.6" cy="4.8" r="3.6" fill="#fff" stroke="#2f7de1" stroke-width="0.9"/><path d="M10.6 4.8 H14.6 M12.6 2.8 V6.8" stroke="#2f7de1" stroke-width="0.9"/></svg>
<svg class="a" style="left:1746.5px;top:921px;" width="9" height="10" viewBox="0 0 9 10"><path d="M0.8 0.8 L8 9 M8 0.8 L0.8 9" stroke="#e8632a" stroke-width="1.5" fill="none"/></svg>
<div class="a" style="left:1715px;top:942px;width:40px;height:17.6px;background:#dcdcdc;border-radius:2.5px;"></div>
<svg class="a" style="left:1722.3px;top:948.0999999999999px;" width="3" height="5.4" viewBox="0 0 3 5.4"><path d="M0 0 L3 2.7 L0 5.4 Z" fill="#333"/></svg>
<span class="a t " style="top:944.14px;font-size:9.4px;line-height:14px;color:#111;left:1734.60px;letter-spacing:0.5px;">Tiedot</span>
<div class="a" style="left:1715px;top:963.3px;width:40px;height:17.8px;background:#dcdcdc;border-radius:2.5px;"></div>
<svg class="a" style="left:1720.6px;top:970.9px;" width="5.6" height="3.2" viewBox="0 0 5.6 3.2"><path d="M0 0 H5.6 L2.8 3.2 Z" fill="#333"/></svg>
<span class="a t " style="top:965.54px;font-size:9.4px;line-height:14px;color:#111;left:1734.60px;letter-spacing:0.5px;">Muoto</span>
<div class="a" style="left:1715px;top:983.2px;width:40px;height:20.4px;background:#fff;border:1px solid #555;"></div>
<svg class="a" style="left:1716.5px;top:985.5px;" width="16" height="16" viewBox="0 0 16 16"><path d="M4 0.8 H10.5 L14.4 4.2 V13.5 Q14.4 15 13 15 H4 Z M10.5 0.8 V4.2 H14.4" fill="#fff" stroke="#333" stroke-width="0.9"/><rect x="0" y="6.2" width="13.6" height="6" fill="#fff"/></svg>
<span class="a t " style="top:990.29px;font-size:5.8px;line-height:10px;color:#222;font-weight:bold;letter-spacing:-0.387px;left:1716.60px;">DWG</span>
<span class="a t " style="top:987.14px;font-size:9.4px;line-height:14px;color:#111;left:1735.60px;letter-spacing:0.4px;">DWG</span>
<div class="a" style="left:1715px;top:1005.3px;width:40px;height:20.6px;background:#fff;border:1px solid #7a7a7a;"></div>
<span class="a t " style="top:1009.04px;font-size:9.4px;line-height:14px;color:#111;left:1720.30px;letter-spacing:0.2px;">01 Lisäreferenssi</span>
<div class="a" style="left:1715.5px;top:1029.6px;width:40px;height:16px;background:#dcdcdc;border:1px solid #cfcfcf;"></div>
<div class="a" style="left:1715.5px;top:1051.3px;width:19.6px;height:20px;background:#fff;border:1px solid #c8c8c8;"></div>
<span class="a t " style="top:1050.79px;font-size:8.4px;line-height:13px;color:#9a9a9a;left:1739.40px;letter-spacing:0.4px;">Leikkaa</span>
<div class="a" style="left:341px;top:311px;width:1124px;height:569px;background:#f0f0f0;border:1px solid #9a9a9a;box-shadow:0 4px 14px rgba(0,0,0,0.20),0 0 3px rgba(0,0,0,0.10);"></div>
<div class="a" style="left:342px;top:312px;width:1122px;height:47.3px;background:#fff;"></div>
<span class="a t " style="top:323.18px;font-size:19.4px;line-height:27px;color:#8f8f8f;letter-spacing:-0.130px;left:352.50px;">Julkaistaan... (1/1 valmis)</span>
<div class="a" style="left:354px;top:384px;width:1070px;height:460px;background:#fff;"></div>
<span class="a t " style="top:366.72px;font-size:8.9px;line-height:14px;color:#000;-webkit-text-stroke:0.22px;letter-spacing:0.368px;left:377.70px;">Nimi</span>
<span class="a t " style="top:366.72px;font-size:8.9px;line-height:14px;color:#000;-webkit-text-stroke:0.22px;letter-spacing:0.500px;left:673.00px;">Tuloste-tiedosto</span>
<span class="a t " style="top:366.72px;font-size:8.9px;line-height:14px;color:#000;-webkit-text-stroke:0.22px;letter-spacing:0.330px;left:1263.00px;">Tila</span>
<span class="a t " style="top:366.72px;font-size:8.9px;line-height:14px;color:#000;-webkit-text-stroke:0.22px;letter-spacing:0.271px;left:1374.50px;">Koko</span>
<div class="a" style="left:354px;top:384px;width:1070px;height:17px;background:#0078d7;"></div>
<svg class="a" style="left:358px;top:385.5px;" width="12" height="13" viewBox="0 0 12 13"><path d="M1 1 L10.6 12 M10.4 1 L1 12" stroke="#ea5a2a" stroke-width="2" fill="none"/></svg>
<span class="a t " style="top:386.72px;font-size:8.9px;line-height:14px;color:#fff;-webkit-text-stroke:0.22px;letter-spacing:-0.001px;left:379.50px;">2. Kerros</span>
<span class="a t " style="top:386.72px;font-size:8.9px;line-height:14px;color:#fff;-webkit-text-stroke:0.22px;letter-spacing:0.398px;left:673.00px;">C:\Users\Futudesign_work\Desktop\Nimetön\Pohjapiirustukset\2. Kerros.dwg</span>
<span class="a t " style="top:386.72px;font-size:8.9px;line-height:14px;color:#fff;-webkit-text-stroke:0.22px;letter-spacing:0.449px;left:1262.60px;">Epäonnistui</span>
<svg class="a" style="left:1432.5px;top:395.5px;" width="11" height="7" viewBox="0 0 11 7"><path d="M0.8 6 L5.5 1.2 L10.2 6" fill="none" stroke="#c6c6c6" stroke-width="2"/></svg>
<svg class="a" style="left:1432.5px;top:825.5px;" width="11" height="7" viewBox="0 0 11 7"><path d="M0.8 1 L5.5 5.8 L10.2 1" fill="none" stroke="#c6c6c6" stroke-width="2"/></svg>
<svg class="a" style="left:355px;top:849px;" width="26" height="26" viewBox="0 0 26 26"><circle cx="12.7" cy="12.6" r="12.4" fill="#0a74d2"/><circle cx="12.7" cy="12.6" r="12" fill="none" stroke="#0563b8" stroke-width="0.8"/><rect x="12" y="8.6" width="1.3" height="10.5" fill="#fff"/><rect x="12" y="5.4" width="1.3" height="1.6" fill="#fff"/></svg>
<span class="a t " style="top:855.12px;font-size:8.9px;line-height:14px;color:#000;-webkit-text-stroke:0.22px;letter-spacing:0.376px;left:383.60px;">Huomioi: kohteen kaksoisosoittaminen listassa näyttää tiedot.</span>
<div class="a" style="left:1378px;top:854px;width:73px;height:17px;background:#e1e1e1;border:1px solid #adadad;"></div>
<span class="a t " style="top:856.22px;font-size:8.9px;line-height:14px;color:#000;-webkit-text-stroke:0.22px;letter-spacing:0.152px;left:1403.60px;">Sulje</span>
<div class="a" style="left:1457.3px;top:863.2px;width:2.8px;height:2.6px;background:#c4c4c4;"></div>
<div class="a" style="left:1452.3px;top:868.2px;width:2.8px;height:2.6px;background:#c4c4c4;"></div>
<div class="a" style="left:1457.3px;top:868.2px;width:2.8px;height:2.6px;background:#c4c4c4;"></div>
<div class="a" style="left:1447.3px;top:873.2px;width:2.8px;height:2.6px;background:#c4c4c4;"></div>
<div class="a" style="left:1452.3px;top:873.2px;width:2.8px;height:2.6px;background:#c4c4c4;"></div>
<div class="a" style="left:1457.3px;top:873.2px;width:2.8px;height:2.6px;background:#c4c4c4;"></div>
<div class="a" style="left:842px;top:595px;width:298px;height:154px;background:#f0f0f0;border:1px solid #7d7d7d;box-shadow:0 3px 10px rgba(0,0,0,0.30),0 0 3px rgba(0,0,0,0.15);"></div>
<div class="a" style="left:843px;top:596px;width:296px;height:47px;background:#fff;"></div>
<svg class="a" style="left:854.4px;top:606.3px;" width="25" height="25" viewBox="0 0 25 25"><defs><linearGradient id="lg1" x1="0.2" y1="0.3" x2="0.9" y2="0.95"><stop offset="0" stop-color="#2848a2"/><stop offset="0.55" stop-color="#4a7be0"/><stop offset="1" stop-color="#5d90f6"/></linearGradient><clipPath id="cp1"><rect x="0" y="0" width="24.8" height="24.4" rx="2.8"/></clipPath></defs><rect x="0" y="0" width="24.8" height="24.4" rx="2.8" fill="#5c8ff5"/><g clip-path="url(#cp1)"><path d="M1.5 25 C6 12 13 6.5 16.5 7.6 C19.6 8.8 20.4 12 20.8 16 C22 19 25 20 25 20 L25 25 Z" fill="url(#lg1)"/></g><path d="M1.4 22.4 C6 10.6 13 4.6 17 6.2 C20 7.6 21 10.4 21.2 13.6" fill="none" stroke="#e6effd" stroke-width="2.3" stroke-linecap="round"/><circle cx="20.9" cy="17.4" r="1.5" fill="#f0f5ff"/></svg>
<span class="a t " style="top:606.81px;font-size:19.6px;line-height:27px;color:#111;letter-spacing:0.133px;left:885.30px;">Tietoja</span>
<svg class="a" style="left:1103px;top:611px;" width="17" height="17" viewBox="0 0 17 17"><path d="M0.8 0.8 L16 16 M16 0.8 L0.8 16" stroke="#1a1a1a" stroke-width="1.4" fill="none"/></svg>
<svg class="a" style="left:849.5px;top:654px;" width="26" height="26" viewBox="0 0 26 26"><circle cx="12.8" cy="12.8" r="12.4" fill="#0a74d2"/><circle cx="12.8" cy="12.8" r="12" fill="none" stroke="#0563b8" stroke-width="0.8"/><rect x="12.1" y="8.8" width="1.3" height="10.5" fill="#fff"/><rect x="12.1" y="5.6" width="1.3" height="1.6" fill="#fff"/></svg>
<span class="a t " style="top:652.72px;font-size:8.9px;line-height:14px;color:#000;font-weight:bold;letter-spacing:0.062px;left:908.00px;">Tuloste epäonnistui koska Archicad ei onnistunut</span>
<span class="a t " style="top:663.72px;font-size:8.9px;line-height:14px;color:#000;font-weight:bold;letter-spacing:0.094px;left:908.00px;">luomaan sitä.</span>
<div class="a" style="left:1074.2px;top:718.8px;width:47.8px;height:18px;background:#e1e1e1;border:2px solid #0078d7;"></div>
<span class="a t " style="top:720.72px;font-size:8.9px;line-height:14px;color:#000;-webkit-text-stroke:0.22px;letter-spacing:0.102px;left:1087.80px;">Sulje</span>
</body>
</html>
